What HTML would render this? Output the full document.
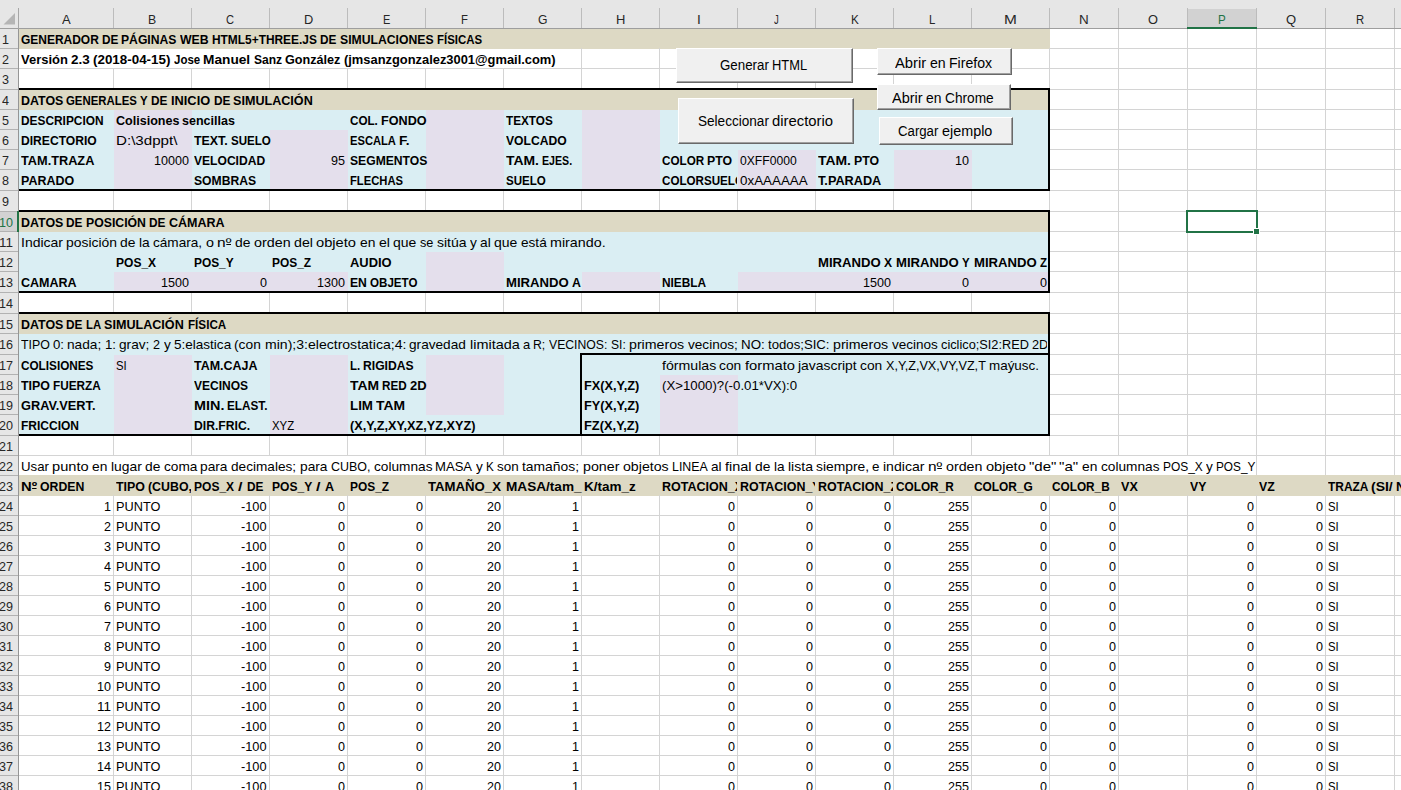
<!DOCTYPE html>
<html lang="es"><head><meta charset="utf-8"><title>Generador de simulaciones físicas</title><style>
html,body{margin:0;padding:0;}
body{width:1401px;height:790px;overflow:hidden;background:#fff;position:relative;font-family:"Liberation Sans",sans-serif;color:#000;}
#s{position:absolute;left:0;top:0;width:1401px;height:790px;overflow:hidden;}
#s div{position:absolute;}
.t{white-space:nowrap;line-height:20px;height:20px;}
.t span{display:inline-block;transform-origin:0 0;white-space:pre;word-spacing:0;}
.t i{font-style:normal;background:linear-gradient(currentColor,currentColor) no-repeat 50% 9px/86% 1px;}
.clip{overflow:hidden;}
.btn{background:#f0f0f0;box-sizing:border-box;border-top:1px solid #fff;border-left:1px solid #fff;border-right:1px solid #696969;border-bottom:1px solid #696969;box-shadow:inset -1px -1px 0 #a0a0a0;}
</style></head><body><div id="s">
<div style="left:19px;top:29px;width:1031px;height:20px;background:#ddd9c4;"></div>
<div style="left:19px;top:90px;width:1031px;height:20px;background:#ddd9c4;"></div>
<div style="left:19px;top:110px;width:1031px;height:81px;background:#daeef3;"></div>
<div style="left:114px;top:110px;width:78px;height:81px;background:#e4dfec;"></div>
<div style="left:270px;top:130px;width:78px;height:61px;background:#e4dfec;"></div>
<div style="left:426px;top:110px;width:78px;height:81px;background:#e4dfec;"></div>
<div style="left:582px;top:110px;width:78px;height:81px;background:#e4dfec;"></div>
<div style="left:738px;top:150px;width:78px;height:41px;background:#e4dfec;"></div>
<div style="left:894px;top:150px;width:78px;height:41px;background:#e4dfec;"></div>
<div style="left:19px;top:212px;width:1031px;height:20px;background:#ddd9c4;"></div>
<div style="left:19px;top:232px;width:1031px;height:61px;background:#daeef3;"></div>
<div style="left:114px;top:272px;width:78px;height:21px;background:#e4dfec;"></div>
<div style="left:192px;top:272px;width:78px;height:21px;background:#e4dfec;"></div>
<div style="left:270px;top:272px;width:78px;height:21px;background:#e4dfec;"></div>
<div style="left:426px;top:252px;width:78px;height:41px;background:#e4dfec;"></div>
<div style="left:582px;top:272px;width:78px;height:21px;background:#e4dfec;"></div>
<div style="left:738px;top:272px;width:78px;height:21px;background:#e4dfec;"></div>
<div style="left:816px;top:272px;width:78px;height:21px;background:#e4dfec;"></div>
<div style="left:894px;top:272px;width:78px;height:21px;background:#e4dfec;"></div>
<div style="left:972px;top:272px;width:78px;height:21px;background:#e4dfec;"></div>
<div style="left:19px;top:314px;width:1031px;height:20px;background:#ddd9c4;"></div>
<div style="left:19px;top:334px;width:1031px;height:102px;background:#daeef3;"></div>
<div style="left:114px;top:355px;width:78px;height:81px;background:#e4dfec;"></div>
<div style="left:270px;top:355px;width:78px;height:81px;background:#e4dfec;"></div>
<div style="left:426px;top:355px;width:78px;height:60px;background:#e4dfec;"></div>
<div style="left:660px;top:375px;width:78px;height:61px;background:#e4dfec;"></div>
<div style="left:19px;top:476px;width:1445px;height:20px;background:#ddd9c4;"></div>
<div style="left:1050px;top:48px;width:351px;height:1px;background:#d4d4d4;"></div>
<div style="left:19px;top:68px;width:1382px;height:1px;background:#d4d4d4;"></div>
<div style="left:19px;top:89px;width:1382px;height:1px;background:#d4d4d4;"></div>
<div style="left:1050px;top:109px;width:351px;height:1px;background:#d4d4d4;"></div>
<div style="left:1050px;top:129px;width:351px;height:1px;background:#d4d4d4;"></div>
<div style="left:1050px;top:149px;width:351px;height:1px;background:#d4d4d4;"></div>
<div style="left:1050px;top:169px;width:351px;height:1px;background:#d4d4d4;"></div>
<div style="left:1050px;top:190px;width:351px;height:1px;background:#d4d4d4;"></div>
<div style="left:19px;top:211px;width:1382px;height:1px;background:#d4d4d4;"></div>
<div style="left:1050px;top:231px;width:351px;height:1px;background:#d4d4d4;"></div>
<div style="left:1050px;top:251px;width:351px;height:1px;background:#d4d4d4;"></div>
<div style="left:1050px;top:271px;width:351px;height:1px;background:#d4d4d4;"></div>
<div style="left:1050px;top:292px;width:351px;height:1px;background:#d4d4d4;"></div>
<div style="left:19px;top:313px;width:1382px;height:1px;background:#d4d4d4;"></div>
<div style="left:1050px;top:333px;width:351px;height:1px;background:#d4d4d4;"></div>
<div style="left:1050px;top:354px;width:351px;height:1px;background:#d4d4d4;"></div>
<div style="left:1050px;top:374px;width:351px;height:1px;background:#d4d4d4;"></div>
<div style="left:1050px;top:394px;width:351px;height:1px;background:#d4d4d4;"></div>
<div style="left:1050px;top:414px;width:351px;height:1px;background:#d4d4d4;"></div>
<div style="left:1050px;top:435px;width:351px;height:1px;background:#d4d4d4;"></div>
<div style="left:19px;top:455px;width:1382px;height:1px;background:#d4d4d4;"></div>
<div style="left:19px;top:475px;width:1382px;height:1px;background:#d4d4d4;"></div>
<div style="left:19px;top:515px;width:1382px;height:1px;background:#d4d4d4;"></div>
<div style="left:19px;top:535px;width:1382px;height:1px;background:#d4d4d4;"></div>
<div style="left:19px;top:555px;width:1382px;height:1px;background:#d4d4d4;"></div>
<div style="left:19px;top:575px;width:1382px;height:1px;background:#d4d4d4;"></div>
<div style="left:19px;top:595px;width:1382px;height:1px;background:#d4d4d4;"></div>
<div style="left:19px;top:615px;width:1382px;height:1px;background:#d4d4d4;"></div>
<div style="left:19px;top:635px;width:1382px;height:1px;background:#d4d4d4;"></div>
<div style="left:19px;top:655px;width:1382px;height:1px;background:#d4d4d4;"></div>
<div style="left:19px;top:675px;width:1382px;height:1px;background:#d4d4d4;"></div>
<div style="left:19px;top:695px;width:1382px;height:1px;background:#d4d4d4;"></div>
<div style="left:19px;top:715px;width:1382px;height:1px;background:#d4d4d4;"></div>
<div style="left:19px;top:735px;width:1382px;height:1px;background:#d4d4d4;"></div>
<div style="left:19px;top:755px;width:1382px;height:1px;background:#d4d4d4;"></div>
<div style="left:19px;top:775px;width:1382px;height:1px;background:#d4d4d4;"></div>
<div style="left:1118px;top:28px;width:1px;height:21px;background:#d4d4d4;"></div>
<div style="left:1187px;top:28px;width:1px;height:21px;background:#d4d4d4;"></div>
<div style="left:1256px;top:28px;width:1px;height:21px;background:#d4d4d4;"></div>
<div style="left:1325px;top:28px;width:1px;height:21px;background:#d4d4d4;"></div>
<div style="left:1394px;top:28px;width:1px;height:21px;background:#d4d4d4;"></div>
<div style="left:581px;top:48px;width:1px;height:21px;background:#d4d4d4;"></div>
<div style="left:659px;top:48px;width:1px;height:21px;background:#d4d4d4;"></div>
<div style="left:737px;top:48px;width:1px;height:21px;background:#d4d4d4;"></div>
<div style="left:815px;top:48px;width:1px;height:21px;background:#d4d4d4;"></div>
<div style="left:893px;top:48px;width:1px;height:21px;background:#d4d4d4;"></div>
<div style="left:971px;top:48px;width:1px;height:21px;background:#d4d4d4;"></div>
<div style="left:1049px;top:48px;width:1px;height:21px;background:#d4d4d4;"></div>
<div style="left:1118px;top:48px;width:1px;height:21px;background:#d4d4d4;"></div>
<div style="left:1187px;top:48px;width:1px;height:21px;background:#d4d4d4;"></div>
<div style="left:1256px;top:48px;width:1px;height:21px;background:#d4d4d4;"></div>
<div style="left:1325px;top:48px;width:1px;height:21px;background:#d4d4d4;"></div>
<div style="left:1394px;top:48px;width:1px;height:21px;background:#d4d4d4;"></div>
<div style="left:113px;top:68px;width:1px;height:22px;background:#d4d4d4;"></div>
<div style="left:191px;top:68px;width:1px;height:22px;background:#d4d4d4;"></div>
<div style="left:269px;top:68px;width:1px;height:22px;background:#d4d4d4;"></div>
<div style="left:347px;top:68px;width:1px;height:22px;background:#d4d4d4;"></div>
<div style="left:425px;top:68px;width:1px;height:22px;background:#d4d4d4;"></div>
<div style="left:503px;top:68px;width:1px;height:22px;background:#d4d4d4;"></div>
<div style="left:581px;top:68px;width:1px;height:22px;background:#d4d4d4;"></div>
<div style="left:659px;top:68px;width:1px;height:22px;background:#d4d4d4;"></div>
<div style="left:737px;top:68px;width:1px;height:22px;background:#d4d4d4;"></div>
<div style="left:815px;top:68px;width:1px;height:22px;background:#d4d4d4;"></div>
<div style="left:893px;top:68px;width:1px;height:22px;background:#d4d4d4;"></div>
<div style="left:971px;top:68px;width:1px;height:22px;background:#d4d4d4;"></div>
<div style="left:1049px;top:68px;width:1px;height:22px;background:#d4d4d4;"></div>
<div style="left:1118px;top:68px;width:1px;height:22px;background:#d4d4d4;"></div>
<div style="left:1187px;top:68px;width:1px;height:22px;background:#d4d4d4;"></div>
<div style="left:1256px;top:68px;width:1px;height:22px;background:#d4d4d4;"></div>
<div style="left:1325px;top:68px;width:1px;height:22px;background:#d4d4d4;"></div>
<div style="left:1394px;top:68px;width:1px;height:22px;background:#d4d4d4;"></div>
<div style="left:1118px;top:89px;width:1px;height:21px;background:#d4d4d4;"></div>
<div style="left:1187px;top:89px;width:1px;height:21px;background:#d4d4d4;"></div>
<div style="left:1256px;top:89px;width:1px;height:21px;background:#d4d4d4;"></div>
<div style="left:1325px;top:89px;width:1px;height:21px;background:#d4d4d4;"></div>
<div style="left:1394px;top:89px;width:1px;height:21px;background:#d4d4d4;"></div>
<div style="left:1118px;top:109px;width:1px;height:21px;background:#d4d4d4;"></div>
<div style="left:1187px;top:109px;width:1px;height:21px;background:#d4d4d4;"></div>
<div style="left:1256px;top:109px;width:1px;height:21px;background:#d4d4d4;"></div>
<div style="left:1325px;top:109px;width:1px;height:21px;background:#d4d4d4;"></div>
<div style="left:1394px;top:109px;width:1px;height:21px;background:#d4d4d4;"></div>
<div style="left:1118px;top:129px;width:1px;height:21px;background:#d4d4d4;"></div>
<div style="left:1187px;top:129px;width:1px;height:21px;background:#d4d4d4;"></div>
<div style="left:1256px;top:129px;width:1px;height:21px;background:#d4d4d4;"></div>
<div style="left:1325px;top:129px;width:1px;height:21px;background:#d4d4d4;"></div>
<div style="left:1394px;top:129px;width:1px;height:21px;background:#d4d4d4;"></div>
<div style="left:1118px;top:149px;width:1px;height:21px;background:#d4d4d4;"></div>
<div style="left:1187px;top:149px;width:1px;height:21px;background:#d4d4d4;"></div>
<div style="left:1256px;top:149px;width:1px;height:21px;background:#d4d4d4;"></div>
<div style="left:1325px;top:149px;width:1px;height:21px;background:#d4d4d4;"></div>
<div style="left:1394px;top:149px;width:1px;height:21px;background:#d4d4d4;"></div>
<div style="left:1118px;top:169px;width:1px;height:22px;background:#d4d4d4;"></div>
<div style="left:1187px;top:169px;width:1px;height:22px;background:#d4d4d4;"></div>
<div style="left:1256px;top:169px;width:1px;height:22px;background:#d4d4d4;"></div>
<div style="left:1325px;top:169px;width:1px;height:22px;background:#d4d4d4;"></div>
<div style="left:1394px;top:169px;width:1px;height:22px;background:#d4d4d4;"></div>
<div style="left:113px;top:190px;width:1px;height:22px;background:#d4d4d4;"></div>
<div style="left:191px;top:190px;width:1px;height:22px;background:#d4d4d4;"></div>
<div style="left:269px;top:190px;width:1px;height:22px;background:#d4d4d4;"></div>
<div style="left:347px;top:190px;width:1px;height:22px;background:#d4d4d4;"></div>
<div style="left:425px;top:190px;width:1px;height:22px;background:#d4d4d4;"></div>
<div style="left:503px;top:190px;width:1px;height:22px;background:#d4d4d4;"></div>
<div style="left:581px;top:190px;width:1px;height:22px;background:#d4d4d4;"></div>
<div style="left:659px;top:190px;width:1px;height:22px;background:#d4d4d4;"></div>
<div style="left:737px;top:190px;width:1px;height:22px;background:#d4d4d4;"></div>
<div style="left:815px;top:190px;width:1px;height:22px;background:#d4d4d4;"></div>
<div style="left:893px;top:190px;width:1px;height:22px;background:#d4d4d4;"></div>
<div style="left:971px;top:190px;width:1px;height:22px;background:#d4d4d4;"></div>
<div style="left:1049px;top:190px;width:1px;height:22px;background:#d4d4d4;"></div>
<div style="left:1118px;top:190px;width:1px;height:22px;background:#d4d4d4;"></div>
<div style="left:1187px;top:190px;width:1px;height:22px;background:#d4d4d4;"></div>
<div style="left:1256px;top:190px;width:1px;height:22px;background:#d4d4d4;"></div>
<div style="left:1325px;top:190px;width:1px;height:22px;background:#d4d4d4;"></div>
<div style="left:1394px;top:190px;width:1px;height:22px;background:#d4d4d4;"></div>
<div style="left:1118px;top:211px;width:1px;height:21px;background:#d4d4d4;"></div>
<div style="left:1187px;top:211px;width:1px;height:21px;background:#d4d4d4;"></div>
<div style="left:1256px;top:211px;width:1px;height:21px;background:#d4d4d4;"></div>
<div style="left:1325px;top:211px;width:1px;height:21px;background:#d4d4d4;"></div>
<div style="left:1394px;top:211px;width:1px;height:21px;background:#d4d4d4;"></div>
<div style="left:1118px;top:231px;width:1px;height:21px;background:#d4d4d4;"></div>
<div style="left:1187px;top:231px;width:1px;height:21px;background:#d4d4d4;"></div>
<div style="left:1256px;top:231px;width:1px;height:21px;background:#d4d4d4;"></div>
<div style="left:1325px;top:231px;width:1px;height:21px;background:#d4d4d4;"></div>
<div style="left:1394px;top:231px;width:1px;height:21px;background:#d4d4d4;"></div>
<div style="left:1118px;top:251px;width:1px;height:21px;background:#d4d4d4;"></div>
<div style="left:1187px;top:251px;width:1px;height:21px;background:#d4d4d4;"></div>
<div style="left:1256px;top:251px;width:1px;height:21px;background:#d4d4d4;"></div>
<div style="left:1325px;top:251px;width:1px;height:21px;background:#d4d4d4;"></div>
<div style="left:1394px;top:251px;width:1px;height:21px;background:#d4d4d4;"></div>
<div style="left:1118px;top:271px;width:1px;height:22px;background:#d4d4d4;"></div>
<div style="left:1187px;top:271px;width:1px;height:22px;background:#d4d4d4;"></div>
<div style="left:1256px;top:271px;width:1px;height:22px;background:#d4d4d4;"></div>
<div style="left:1325px;top:271px;width:1px;height:22px;background:#d4d4d4;"></div>
<div style="left:1394px;top:271px;width:1px;height:22px;background:#d4d4d4;"></div>
<div style="left:113px;top:292px;width:1px;height:22px;background:#d4d4d4;"></div>
<div style="left:191px;top:292px;width:1px;height:22px;background:#d4d4d4;"></div>
<div style="left:269px;top:292px;width:1px;height:22px;background:#d4d4d4;"></div>
<div style="left:347px;top:292px;width:1px;height:22px;background:#d4d4d4;"></div>
<div style="left:425px;top:292px;width:1px;height:22px;background:#d4d4d4;"></div>
<div style="left:503px;top:292px;width:1px;height:22px;background:#d4d4d4;"></div>
<div style="left:581px;top:292px;width:1px;height:22px;background:#d4d4d4;"></div>
<div style="left:659px;top:292px;width:1px;height:22px;background:#d4d4d4;"></div>
<div style="left:737px;top:292px;width:1px;height:22px;background:#d4d4d4;"></div>
<div style="left:815px;top:292px;width:1px;height:22px;background:#d4d4d4;"></div>
<div style="left:893px;top:292px;width:1px;height:22px;background:#d4d4d4;"></div>
<div style="left:971px;top:292px;width:1px;height:22px;background:#d4d4d4;"></div>
<div style="left:1049px;top:292px;width:1px;height:22px;background:#d4d4d4;"></div>
<div style="left:1118px;top:292px;width:1px;height:22px;background:#d4d4d4;"></div>
<div style="left:1187px;top:292px;width:1px;height:22px;background:#d4d4d4;"></div>
<div style="left:1256px;top:292px;width:1px;height:22px;background:#d4d4d4;"></div>
<div style="left:1325px;top:292px;width:1px;height:22px;background:#d4d4d4;"></div>
<div style="left:1394px;top:292px;width:1px;height:22px;background:#d4d4d4;"></div>
<div style="left:1118px;top:313px;width:1px;height:21px;background:#d4d4d4;"></div>
<div style="left:1187px;top:313px;width:1px;height:21px;background:#d4d4d4;"></div>
<div style="left:1256px;top:313px;width:1px;height:21px;background:#d4d4d4;"></div>
<div style="left:1325px;top:313px;width:1px;height:21px;background:#d4d4d4;"></div>
<div style="left:1394px;top:313px;width:1px;height:21px;background:#d4d4d4;"></div>
<div style="left:1118px;top:333px;width:1px;height:22px;background:#d4d4d4;"></div>
<div style="left:1187px;top:333px;width:1px;height:22px;background:#d4d4d4;"></div>
<div style="left:1256px;top:333px;width:1px;height:22px;background:#d4d4d4;"></div>
<div style="left:1325px;top:333px;width:1px;height:22px;background:#d4d4d4;"></div>
<div style="left:1394px;top:333px;width:1px;height:22px;background:#d4d4d4;"></div>
<div style="left:1118px;top:354px;width:1px;height:21px;background:#d4d4d4;"></div>
<div style="left:1187px;top:354px;width:1px;height:21px;background:#d4d4d4;"></div>
<div style="left:1256px;top:354px;width:1px;height:21px;background:#d4d4d4;"></div>
<div style="left:1325px;top:354px;width:1px;height:21px;background:#d4d4d4;"></div>
<div style="left:1394px;top:354px;width:1px;height:21px;background:#d4d4d4;"></div>
<div style="left:1118px;top:374px;width:1px;height:21px;background:#d4d4d4;"></div>
<div style="left:1187px;top:374px;width:1px;height:21px;background:#d4d4d4;"></div>
<div style="left:1256px;top:374px;width:1px;height:21px;background:#d4d4d4;"></div>
<div style="left:1325px;top:374px;width:1px;height:21px;background:#d4d4d4;"></div>
<div style="left:1394px;top:374px;width:1px;height:21px;background:#d4d4d4;"></div>
<div style="left:1118px;top:394px;width:1px;height:21px;background:#d4d4d4;"></div>
<div style="left:1187px;top:394px;width:1px;height:21px;background:#d4d4d4;"></div>
<div style="left:1256px;top:394px;width:1px;height:21px;background:#d4d4d4;"></div>
<div style="left:1325px;top:394px;width:1px;height:21px;background:#d4d4d4;"></div>
<div style="left:1394px;top:394px;width:1px;height:21px;background:#d4d4d4;"></div>
<div style="left:1118px;top:414px;width:1px;height:22px;background:#d4d4d4;"></div>
<div style="left:1187px;top:414px;width:1px;height:22px;background:#d4d4d4;"></div>
<div style="left:1256px;top:414px;width:1px;height:22px;background:#d4d4d4;"></div>
<div style="left:1325px;top:414px;width:1px;height:22px;background:#d4d4d4;"></div>
<div style="left:1394px;top:414px;width:1px;height:22px;background:#d4d4d4;"></div>
<div style="left:113px;top:435px;width:1px;height:21px;background:#d4d4d4;"></div>
<div style="left:191px;top:435px;width:1px;height:21px;background:#d4d4d4;"></div>
<div style="left:269px;top:435px;width:1px;height:21px;background:#d4d4d4;"></div>
<div style="left:347px;top:435px;width:1px;height:21px;background:#d4d4d4;"></div>
<div style="left:425px;top:435px;width:1px;height:21px;background:#d4d4d4;"></div>
<div style="left:503px;top:435px;width:1px;height:21px;background:#d4d4d4;"></div>
<div style="left:581px;top:435px;width:1px;height:21px;background:#d4d4d4;"></div>
<div style="left:659px;top:435px;width:1px;height:21px;background:#d4d4d4;"></div>
<div style="left:737px;top:435px;width:1px;height:21px;background:#d4d4d4;"></div>
<div style="left:815px;top:435px;width:1px;height:21px;background:#d4d4d4;"></div>
<div style="left:893px;top:435px;width:1px;height:21px;background:#d4d4d4;"></div>
<div style="left:971px;top:435px;width:1px;height:21px;background:#d4d4d4;"></div>
<div style="left:1049px;top:435px;width:1px;height:21px;background:#d4d4d4;"></div>
<div style="left:1118px;top:435px;width:1px;height:21px;background:#d4d4d4;"></div>
<div style="left:1187px;top:435px;width:1px;height:21px;background:#d4d4d4;"></div>
<div style="left:1256px;top:435px;width:1px;height:21px;background:#d4d4d4;"></div>
<div style="left:1325px;top:435px;width:1px;height:21px;background:#d4d4d4;"></div>
<div style="left:1394px;top:435px;width:1px;height:21px;background:#d4d4d4;"></div>
<div style="left:1256px;top:455px;width:1px;height:21px;background:#d4d4d4;"></div>
<div style="left:1325px;top:455px;width:1px;height:21px;background:#d4d4d4;"></div>
<div style="left:1394px;top:455px;width:1px;height:21px;background:#d4d4d4;"></div>
<div style="left:113px;top:495px;width:1px;height:21px;background:#d4d4d4;"></div>
<div style="left:191px;top:495px;width:1px;height:21px;background:#d4d4d4;"></div>
<div style="left:269px;top:495px;width:1px;height:21px;background:#d4d4d4;"></div>
<div style="left:347px;top:495px;width:1px;height:21px;background:#d4d4d4;"></div>
<div style="left:425px;top:495px;width:1px;height:21px;background:#d4d4d4;"></div>
<div style="left:503px;top:495px;width:1px;height:21px;background:#d4d4d4;"></div>
<div style="left:581px;top:495px;width:1px;height:21px;background:#d4d4d4;"></div>
<div style="left:659px;top:495px;width:1px;height:21px;background:#d4d4d4;"></div>
<div style="left:737px;top:495px;width:1px;height:21px;background:#d4d4d4;"></div>
<div style="left:815px;top:495px;width:1px;height:21px;background:#d4d4d4;"></div>
<div style="left:893px;top:495px;width:1px;height:21px;background:#d4d4d4;"></div>
<div style="left:971px;top:495px;width:1px;height:21px;background:#d4d4d4;"></div>
<div style="left:1049px;top:495px;width:1px;height:21px;background:#d4d4d4;"></div>
<div style="left:1118px;top:495px;width:1px;height:21px;background:#d4d4d4;"></div>
<div style="left:1187px;top:495px;width:1px;height:21px;background:#d4d4d4;"></div>
<div style="left:1256px;top:495px;width:1px;height:21px;background:#d4d4d4;"></div>
<div style="left:1325px;top:495px;width:1px;height:21px;background:#d4d4d4;"></div>
<div style="left:1394px;top:495px;width:1px;height:21px;background:#d4d4d4;"></div>
<div style="left:113px;top:515px;width:1px;height:21px;background:#d4d4d4;"></div>
<div style="left:191px;top:515px;width:1px;height:21px;background:#d4d4d4;"></div>
<div style="left:269px;top:515px;width:1px;height:21px;background:#d4d4d4;"></div>
<div style="left:347px;top:515px;width:1px;height:21px;background:#d4d4d4;"></div>
<div style="left:425px;top:515px;width:1px;height:21px;background:#d4d4d4;"></div>
<div style="left:503px;top:515px;width:1px;height:21px;background:#d4d4d4;"></div>
<div style="left:581px;top:515px;width:1px;height:21px;background:#d4d4d4;"></div>
<div style="left:659px;top:515px;width:1px;height:21px;background:#d4d4d4;"></div>
<div style="left:737px;top:515px;width:1px;height:21px;background:#d4d4d4;"></div>
<div style="left:815px;top:515px;width:1px;height:21px;background:#d4d4d4;"></div>
<div style="left:893px;top:515px;width:1px;height:21px;background:#d4d4d4;"></div>
<div style="left:971px;top:515px;width:1px;height:21px;background:#d4d4d4;"></div>
<div style="left:1049px;top:515px;width:1px;height:21px;background:#d4d4d4;"></div>
<div style="left:1118px;top:515px;width:1px;height:21px;background:#d4d4d4;"></div>
<div style="left:1187px;top:515px;width:1px;height:21px;background:#d4d4d4;"></div>
<div style="left:1256px;top:515px;width:1px;height:21px;background:#d4d4d4;"></div>
<div style="left:1325px;top:515px;width:1px;height:21px;background:#d4d4d4;"></div>
<div style="left:1394px;top:515px;width:1px;height:21px;background:#d4d4d4;"></div>
<div style="left:113px;top:535px;width:1px;height:21px;background:#d4d4d4;"></div>
<div style="left:191px;top:535px;width:1px;height:21px;background:#d4d4d4;"></div>
<div style="left:269px;top:535px;width:1px;height:21px;background:#d4d4d4;"></div>
<div style="left:347px;top:535px;width:1px;height:21px;background:#d4d4d4;"></div>
<div style="left:425px;top:535px;width:1px;height:21px;background:#d4d4d4;"></div>
<div style="left:503px;top:535px;width:1px;height:21px;background:#d4d4d4;"></div>
<div style="left:581px;top:535px;width:1px;height:21px;background:#d4d4d4;"></div>
<div style="left:659px;top:535px;width:1px;height:21px;background:#d4d4d4;"></div>
<div style="left:737px;top:535px;width:1px;height:21px;background:#d4d4d4;"></div>
<div style="left:815px;top:535px;width:1px;height:21px;background:#d4d4d4;"></div>
<div style="left:893px;top:535px;width:1px;height:21px;background:#d4d4d4;"></div>
<div style="left:971px;top:535px;width:1px;height:21px;background:#d4d4d4;"></div>
<div style="left:1049px;top:535px;width:1px;height:21px;background:#d4d4d4;"></div>
<div style="left:1118px;top:535px;width:1px;height:21px;background:#d4d4d4;"></div>
<div style="left:1187px;top:535px;width:1px;height:21px;background:#d4d4d4;"></div>
<div style="left:1256px;top:535px;width:1px;height:21px;background:#d4d4d4;"></div>
<div style="left:1325px;top:535px;width:1px;height:21px;background:#d4d4d4;"></div>
<div style="left:1394px;top:535px;width:1px;height:21px;background:#d4d4d4;"></div>
<div style="left:113px;top:555px;width:1px;height:21px;background:#d4d4d4;"></div>
<div style="left:191px;top:555px;width:1px;height:21px;background:#d4d4d4;"></div>
<div style="left:269px;top:555px;width:1px;height:21px;background:#d4d4d4;"></div>
<div style="left:347px;top:555px;width:1px;height:21px;background:#d4d4d4;"></div>
<div style="left:425px;top:555px;width:1px;height:21px;background:#d4d4d4;"></div>
<div style="left:503px;top:555px;width:1px;height:21px;background:#d4d4d4;"></div>
<div style="left:581px;top:555px;width:1px;height:21px;background:#d4d4d4;"></div>
<div style="left:659px;top:555px;width:1px;height:21px;background:#d4d4d4;"></div>
<div style="left:737px;top:555px;width:1px;height:21px;background:#d4d4d4;"></div>
<div style="left:815px;top:555px;width:1px;height:21px;background:#d4d4d4;"></div>
<div style="left:893px;top:555px;width:1px;height:21px;background:#d4d4d4;"></div>
<div style="left:971px;top:555px;width:1px;height:21px;background:#d4d4d4;"></div>
<div style="left:1049px;top:555px;width:1px;height:21px;background:#d4d4d4;"></div>
<div style="left:1118px;top:555px;width:1px;height:21px;background:#d4d4d4;"></div>
<div style="left:1187px;top:555px;width:1px;height:21px;background:#d4d4d4;"></div>
<div style="left:1256px;top:555px;width:1px;height:21px;background:#d4d4d4;"></div>
<div style="left:1325px;top:555px;width:1px;height:21px;background:#d4d4d4;"></div>
<div style="left:1394px;top:555px;width:1px;height:21px;background:#d4d4d4;"></div>
<div style="left:113px;top:575px;width:1px;height:21px;background:#d4d4d4;"></div>
<div style="left:191px;top:575px;width:1px;height:21px;background:#d4d4d4;"></div>
<div style="left:269px;top:575px;width:1px;height:21px;background:#d4d4d4;"></div>
<div style="left:347px;top:575px;width:1px;height:21px;background:#d4d4d4;"></div>
<div style="left:425px;top:575px;width:1px;height:21px;background:#d4d4d4;"></div>
<div style="left:503px;top:575px;width:1px;height:21px;background:#d4d4d4;"></div>
<div style="left:581px;top:575px;width:1px;height:21px;background:#d4d4d4;"></div>
<div style="left:659px;top:575px;width:1px;height:21px;background:#d4d4d4;"></div>
<div style="left:737px;top:575px;width:1px;height:21px;background:#d4d4d4;"></div>
<div style="left:815px;top:575px;width:1px;height:21px;background:#d4d4d4;"></div>
<div style="left:893px;top:575px;width:1px;height:21px;background:#d4d4d4;"></div>
<div style="left:971px;top:575px;width:1px;height:21px;background:#d4d4d4;"></div>
<div style="left:1049px;top:575px;width:1px;height:21px;background:#d4d4d4;"></div>
<div style="left:1118px;top:575px;width:1px;height:21px;background:#d4d4d4;"></div>
<div style="left:1187px;top:575px;width:1px;height:21px;background:#d4d4d4;"></div>
<div style="left:1256px;top:575px;width:1px;height:21px;background:#d4d4d4;"></div>
<div style="left:1325px;top:575px;width:1px;height:21px;background:#d4d4d4;"></div>
<div style="left:1394px;top:575px;width:1px;height:21px;background:#d4d4d4;"></div>
<div style="left:113px;top:595px;width:1px;height:21px;background:#d4d4d4;"></div>
<div style="left:191px;top:595px;width:1px;height:21px;background:#d4d4d4;"></div>
<div style="left:269px;top:595px;width:1px;height:21px;background:#d4d4d4;"></div>
<div style="left:347px;top:595px;width:1px;height:21px;background:#d4d4d4;"></div>
<div style="left:425px;top:595px;width:1px;height:21px;background:#d4d4d4;"></div>
<div style="left:503px;top:595px;width:1px;height:21px;background:#d4d4d4;"></div>
<div style="left:581px;top:595px;width:1px;height:21px;background:#d4d4d4;"></div>
<div style="left:659px;top:595px;width:1px;height:21px;background:#d4d4d4;"></div>
<div style="left:737px;top:595px;width:1px;height:21px;background:#d4d4d4;"></div>
<div style="left:815px;top:595px;width:1px;height:21px;background:#d4d4d4;"></div>
<div style="left:893px;top:595px;width:1px;height:21px;background:#d4d4d4;"></div>
<div style="left:971px;top:595px;width:1px;height:21px;background:#d4d4d4;"></div>
<div style="left:1049px;top:595px;width:1px;height:21px;background:#d4d4d4;"></div>
<div style="left:1118px;top:595px;width:1px;height:21px;background:#d4d4d4;"></div>
<div style="left:1187px;top:595px;width:1px;height:21px;background:#d4d4d4;"></div>
<div style="left:1256px;top:595px;width:1px;height:21px;background:#d4d4d4;"></div>
<div style="left:1325px;top:595px;width:1px;height:21px;background:#d4d4d4;"></div>
<div style="left:1394px;top:595px;width:1px;height:21px;background:#d4d4d4;"></div>
<div style="left:113px;top:615px;width:1px;height:21px;background:#d4d4d4;"></div>
<div style="left:191px;top:615px;width:1px;height:21px;background:#d4d4d4;"></div>
<div style="left:269px;top:615px;width:1px;height:21px;background:#d4d4d4;"></div>
<div style="left:347px;top:615px;width:1px;height:21px;background:#d4d4d4;"></div>
<div style="left:425px;top:615px;width:1px;height:21px;background:#d4d4d4;"></div>
<div style="left:503px;top:615px;width:1px;height:21px;background:#d4d4d4;"></div>
<div style="left:581px;top:615px;width:1px;height:21px;background:#d4d4d4;"></div>
<div style="left:659px;top:615px;width:1px;height:21px;background:#d4d4d4;"></div>
<div style="left:737px;top:615px;width:1px;height:21px;background:#d4d4d4;"></div>
<div style="left:815px;top:615px;width:1px;height:21px;background:#d4d4d4;"></div>
<div style="left:893px;top:615px;width:1px;height:21px;background:#d4d4d4;"></div>
<div style="left:971px;top:615px;width:1px;height:21px;background:#d4d4d4;"></div>
<div style="left:1049px;top:615px;width:1px;height:21px;background:#d4d4d4;"></div>
<div style="left:1118px;top:615px;width:1px;height:21px;background:#d4d4d4;"></div>
<div style="left:1187px;top:615px;width:1px;height:21px;background:#d4d4d4;"></div>
<div style="left:1256px;top:615px;width:1px;height:21px;background:#d4d4d4;"></div>
<div style="left:1325px;top:615px;width:1px;height:21px;background:#d4d4d4;"></div>
<div style="left:1394px;top:615px;width:1px;height:21px;background:#d4d4d4;"></div>
<div style="left:113px;top:635px;width:1px;height:21px;background:#d4d4d4;"></div>
<div style="left:191px;top:635px;width:1px;height:21px;background:#d4d4d4;"></div>
<div style="left:269px;top:635px;width:1px;height:21px;background:#d4d4d4;"></div>
<div style="left:347px;top:635px;width:1px;height:21px;background:#d4d4d4;"></div>
<div style="left:425px;top:635px;width:1px;height:21px;background:#d4d4d4;"></div>
<div style="left:503px;top:635px;width:1px;height:21px;background:#d4d4d4;"></div>
<div style="left:581px;top:635px;width:1px;height:21px;background:#d4d4d4;"></div>
<div style="left:659px;top:635px;width:1px;height:21px;background:#d4d4d4;"></div>
<div style="left:737px;top:635px;width:1px;height:21px;background:#d4d4d4;"></div>
<div style="left:815px;top:635px;width:1px;height:21px;background:#d4d4d4;"></div>
<div style="left:893px;top:635px;width:1px;height:21px;background:#d4d4d4;"></div>
<div style="left:971px;top:635px;width:1px;height:21px;background:#d4d4d4;"></div>
<div style="left:1049px;top:635px;width:1px;height:21px;background:#d4d4d4;"></div>
<div style="left:1118px;top:635px;width:1px;height:21px;background:#d4d4d4;"></div>
<div style="left:1187px;top:635px;width:1px;height:21px;background:#d4d4d4;"></div>
<div style="left:1256px;top:635px;width:1px;height:21px;background:#d4d4d4;"></div>
<div style="left:1325px;top:635px;width:1px;height:21px;background:#d4d4d4;"></div>
<div style="left:1394px;top:635px;width:1px;height:21px;background:#d4d4d4;"></div>
<div style="left:113px;top:655px;width:1px;height:21px;background:#d4d4d4;"></div>
<div style="left:191px;top:655px;width:1px;height:21px;background:#d4d4d4;"></div>
<div style="left:269px;top:655px;width:1px;height:21px;background:#d4d4d4;"></div>
<div style="left:347px;top:655px;width:1px;height:21px;background:#d4d4d4;"></div>
<div style="left:425px;top:655px;width:1px;height:21px;background:#d4d4d4;"></div>
<div style="left:503px;top:655px;width:1px;height:21px;background:#d4d4d4;"></div>
<div style="left:581px;top:655px;width:1px;height:21px;background:#d4d4d4;"></div>
<div style="left:659px;top:655px;width:1px;height:21px;background:#d4d4d4;"></div>
<div style="left:737px;top:655px;width:1px;height:21px;background:#d4d4d4;"></div>
<div style="left:815px;top:655px;width:1px;height:21px;background:#d4d4d4;"></div>
<div style="left:893px;top:655px;width:1px;height:21px;background:#d4d4d4;"></div>
<div style="left:971px;top:655px;width:1px;height:21px;background:#d4d4d4;"></div>
<div style="left:1049px;top:655px;width:1px;height:21px;background:#d4d4d4;"></div>
<div style="left:1118px;top:655px;width:1px;height:21px;background:#d4d4d4;"></div>
<div style="left:1187px;top:655px;width:1px;height:21px;background:#d4d4d4;"></div>
<div style="left:1256px;top:655px;width:1px;height:21px;background:#d4d4d4;"></div>
<div style="left:1325px;top:655px;width:1px;height:21px;background:#d4d4d4;"></div>
<div style="left:1394px;top:655px;width:1px;height:21px;background:#d4d4d4;"></div>
<div style="left:113px;top:675px;width:1px;height:21px;background:#d4d4d4;"></div>
<div style="left:191px;top:675px;width:1px;height:21px;background:#d4d4d4;"></div>
<div style="left:269px;top:675px;width:1px;height:21px;background:#d4d4d4;"></div>
<div style="left:347px;top:675px;width:1px;height:21px;background:#d4d4d4;"></div>
<div style="left:425px;top:675px;width:1px;height:21px;background:#d4d4d4;"></div>
<div style="left:503px;top:675px;width:1px;height:21px;background:#d4d4d4;"></div>
<div style="left:581px;top:675px;width:1px;height:21px;background:#d4d4d4;"></div>
<div style="left:659px;top:675px;width:1px;height:21px;background:#d4d4d4;"></div>
<div style="left:737px;top:675px;width:1px;height:21px;background:#d4d4d4;"></div>
<div style="left:815px;top:675px;width:1px;height:21px;background:#d4d4d4;"></div>
<div style="left:893px;top:675px;width:1px;height:21px;background:#d4d4d4;"></div>
<div style="left:971px;top:675px;width:1px;height:21px;background:#d4d4d4;"></div>
<div style="left:1049px;top:675px;width:1px;height:21px;background:#d4d4d4;"></div>
<div style="left:1118px;top:675px;width:1px;height:21px;background:#d4d4d4;"></div>
<div style="left:1187px;top:675px;width:1px;height:21px;background:#d4d4d4;"></div>
<div style="left:1256px;top:675px;width:1px;height:21px;background:#d4d4d4;"></div>
<div style="left:1325px;top:675px;width:1px;height:21px;background:#d4d4d4;"></div>
<div style="left:1394px;top:675px;width:1px;height:21px;background:#d4d4d4;"></div>
<div style="left:113px;top:695px;width:1px;height:21px;background:#d4d4d4;"></div>
<div style="left:191px;top:695px;width:1px;height:21px;background:#d4d4d4;"></div>
<div style="left:269px;top:695px;width:1px;height:21px;background:#d4d4d4;"></div>
<div style="left:347px;top:695px;width:1px;height:21px;background:#d4d4d4;"></div>
<div style="left:425px;top:695px;width:1px;height:21px;background:#d4d4d4;"></div>
<div style="left:503px;top:695px;width:1px;height:21px;background:#d4d4d4;"></div>
<div style="left:581px;top:695px;width:1px;height:21px;background:#d4d4d4;"></div>
<div style="left:659px;top:695px;width:1px;height:21px;background:#d4d4d4;"></div>
<div style="left:737px;top:695px;width:1px;height:21px;background:#d4d4d4;"></div>
<div style="left:815px;top:695px;width:1px;height:21px;background:#d4d4d4;"></div>
<div style="left:893px;top:695px;width:1px;height:21px;background:#d4d4d4;"></div>
<div style="left:971px;top:695px;width:1px;height:21px;background:#d4d4d4;"></div>
<div style="left:1049px;top:695px;width:1px;height:21px;background:#d4d4d4;"></div>
<div style="left:1118px;top:695px;width:1px;height:21px;background:#d4d4d4;"></div>
<div style="left:1187px;top:695px;width:1px;height:21px;background:#d4d4d4;"></div>
<div style="left:1256px;top:695px;width:1px;height:21px;background:#d4d4d4;"></div>
<div style="left:1325px;top:695px;width:1px;height:21px;background:#d4d4d4;"></div>
<div style="left:1394px;top:695px;width:1px;height:21px;background:#d4d4d4;"></div>
<div style="left:113px;top:715px;width:1px;height:21px;background:#d4d4d4;"></div>
<div style="left:191px;top:715px;width:1px;height:21px;background:#d4d4d4;"></div>
<div style="left:269px;top:715px;width:1px;height:21px;background:#d4d4d4;"></div>
<div style="left:347px;top:715px;width:1px;height:21px;background:#d4d4d4;"></div>
<div style="left:425px;top:715px;width:1px;height:21px;background:#d4d4d4;"></div>
<div style="left:503px;top:715px;width:1px;height:21px;background:#d4d4d4;"></div>
<div style="left:581px;top:715px;width:1px;height:21px;background:#d4d4d4;"></div>
<div style="left:659px;top:715px;width:1px;height:21px;background:#d4d4d4;"></div>
<div style="left:737px;top:715px;width:1px;height:21px;background:#d4d4d4;"></div>
<div style="left:815px;top:715px;width:1px;height:21px;background:#d4d4d4;"></div>
<div style="left:893px;top:715px;width:1px;height:21px;background:#d4d4d4;"></div>
<div style="left:971px;top:715px;width:1px;height:21px;background:#d4d4d4;"></div>
<div style="left:1049px;top:715px;width:1px;height:21px;background:#d4d4d4;"></div>
<div style="left:1118px;top:715px;width:1px;height:21px;background:#d4d4d4;"></div>
<div style="left:1187px;top:715px;width:1px;height:21px;background:#d4d4d4;"></div>
<div style="left:1256px;top:715px;width:1px;height:21px;background:#d4d4d4;"></div>
<div style="left:1325px;top:715px;width:1px;height:21px;background:#d4d4d4;"></div>
<div style="left:1394px;top:715px;width:1px;height:21px;background:#d4d4d4;"></div>
<div style="left:113px;top:735px;width:1px;height:21px;background:#d4d4d4;"></div>
<div style="left:191px;top:735px;width:1px;height:21px;background:#d4d4d4;"></div>
<div style="left:269px;top:735px;width:1px;height:21px;background:#d4d4d4;"></div>
<div style="left:347px;top:735px;width:1px;height:21px;background:#d4d4d4;"></div>
<div style="left:425px;top:735px;width:1px;height:21px;background:#d4d4d4;"></div>
<div style="left:503px;top:735px;width:1px;height:21px;background:#d4d4d4;"></div>
<div style="left:581px;top:735px;width:1px;height:21px;background:#d4d4d4;"></div>
<div style="left:659px;top:735px;width:1px;height:21px;background:#d4d4d4;"></div>
<div style="left:737px;top:735px;width:1px;height:21px;background:#d4d4d4;"></div>
<div style="left:815px;top:735px;width:1px;height:21px;background:#d4d4d4;"></div>
<div style="left:893px;top:735px;width:1px;height:21px;background:#d4d4d4;"></div>
<div style="left:971px;top:735px;width:1px;height:21px;background:#d4d4d4;"></div>
<div style="left:1049px;top:735px;width:1px;height:21px;background:#d4d4d4;"></div>
<div style="left:1118px;top:735px;width:1px;height:21px;background:#d4d4d4;"></div>
<div style="left:1187px;top:735px;width:1px;height:21px;background:#d4d4d4;"></div>
<div style="left:1256px;top:735px;width:1px;height:21px;background:#d4d4d4;"></div>
<div style="left:1325px;top:735px;width:1px;height:21px;background:#d4d4d4;"></div>
<div style="left:1394px;top:735px;width:1px;height:21px;background:#d4d4d4;"></div>
<div style="left:113px;top:755px;width:1px;height:21px;background:#d4d4d4;"></div>
<div style="left:191px;top:755px;width:1px;height:21px;background:#d4d4d4;"></div>
<div style="left:269px;top:755px;width:1px;height:21px;background:#d4d4d4;"></div>
<div style="left:347px;top:755px;width:1px;height:21px;background:#d4d4d4;"></div>
<div style="left:425px;top:755px;width:1px;height:21px;background:#d4d4d4;"></div>
<div style="left:503px;top:755px;width:1px;height:21px;background:#d4d4d4;"></div>
<div style="left:581px;top:755px;width:1px;height:21px;background:#d4d4d4;"></div>
<div style="left:659px;top:755px;width:1px;height:21px;background:#d4d4d4;"></div>
<div style="left:737px;top:755px;width:1px;height:21px;background:#d4d4d4;"></div>
<div style="left:815px;top:755px;width:1px;height:21px;background:#d4d4d4;"></div>
<div style="left:893px;top:755px;width:1px;height:21px;background:#d4d4d4;"></div>
<div style="left:971px;top:755px;width:1px;height:21px;background:#d4d4d4;"></div>
<div style="left:1049px;top:755px;width:1px;height:21px;background:#d4d4d4;"></div>
<div style="left:1118px;top:755px;width:1px;height:21px;background:#d4d4d4;"></div>
<div style="left:1187px;top:755px;width:1px;height:21px;background:#d4d4d4;"></div>
<div style="left:1256px;top:755px;width:1px;height:21px;background:#d4d4d4;"></div>
<div style="left:1325px;top:755px;width:1px;height:21px;background:#d4d4d4;"></div>
<div style="left:1394px;top:755px;width:1px;height:21px;background:#d4d4d4;"></div>
<div style="left:113px;top:775px;width:1px;height:21px;background:#d4d4d4;"></div>
<div style="left:191px;top:775px;width:1px;height:21px;background:#d4d4d4;"></div>
<div style="left:269px;top:775px;width:1px;height:21px;background:#d4d4d4;"></div>
<div style="left:347px;top:775px;width:1px;height:21px;background:#d4d4d4;"></div>
<div style="left:425px;top:775px;width:1px;height:21px;background:#d4d4d4;"></div>
<div style="left:503px;top:775px;width:1px;height:21px;background:#d4d4d4;"></div>
<div style="left:581px;top:775px;width:1px;height:21px;background:#d4d4d4;"></div>
<div style="left:659px;top:775px;width:1px;height:21px;background:#d4d4d4;"></div>
<div style="left:737px;top:775px;width:1px;height:21px;background:#d4d4d4;"></div>
<div style="left:815px;top:775px;width:1px;height:21px;background:#d4d4d4;"></div>
<div style="left:893px;top:775px;width:1px;height:21px;background:#d4d4d4;"></div>
<div style="left:971px;top:775px;width:1px;height:21px;background:#d4d4d4;"></div>
<div style="left:1049px;top:775px;width:1px;height:21px;background:#d4d4d4;"></div>
<div style="left:1118px;top:775px;width:1px;height:21px;background:#d4d4d4;"></div>
<div style="left:1187px;top:775px;width:1px;height:21px;background:#d4d4d4;"></div>
<div style="left:1256px;top:775px;width:1px;height:21px;background:#d4d4d4;"></div>
<div style="left:1325px;top:775px;width:1px;height:21px;background:#d4d4d4;"></div>
<div style="left:1394px;top:775px;width:1px;height:21px;background:#d4d4d4;"></div>
<div style="left:19px;top:475px;width:1382px;height:1px;background:#ddd9c4;"></div>
<div style="left:19px;top:88px;width:1031px;height:2px;background:#000;"></div>
<div style="left:19px;top:189px;width:1031px;height:2px;background:#000;"></div>
<div style="left:1048px;top:88px;width:2px;height:103px;background:#000;"></div>
<div style="left:19px;top:210px;width:1031px;height:2px;background:#000;"></div>
<div style="left:19px;top:291px;width:1031px;height:2px;background:#000;"></div>
<div style="left:1048px;top:210px;width:2px;height:83px;background:#000;"></div>
<div style="left:19px;top:312px;width:1031px;height:2px;background:#000;"></div>
<div style="left:19px;top:434px;width:1031px;height:2px;background:#000;"></div>
<div style="left:1048px;top:312px;width:2px;height:124px;background:#000;"></div>
<div style="left:580px;top:353px;width:470px;height:2px;background:#000;"></div>
<div style="left:580px;top:434px;width:470px;height:2px;background:#000;"></div>
<div style="left:580px;top:353px;width:2px;height:83px;background:#000;"></div>
<div style="left:1048px;top:353px;width:2px;height:83px;background:#000;"></div>
<div class="t " style="left:20.60px;top:30px;font-size:13.33px;font-weight:bold;word-spacing:-0.390px;"><span style="width:77.818px;transform:scaleX(0.8980)">GENERADOR</span> <span style="width:16.387px;transform:scaleX(0.8849)">DE</span> <span style="width:55.384px;transform:scaleX(0.9119)">PÁGINAS</span> <span style="width:28.644px;transform:scaleX(0.9210)">WEB</span> <span style="width:104.871px;transform:scaleX(0.8933)">HTML5+THREE.JS</span> <span style="width:16.387px;transform:scaleX(0.8849)">DE</span> <span style="width:93.588px;transform:scaleX(0.9157)">SIMULACIONES</span> <span style="width:45.030px;transform:scaleX(0.8563)">FÍSICAS</span></div>
<div class="t " style="left:20.60px;top:50px;font-size:13.33px;font-weight:bold;word-spacing:-0.361px;"><span style="width:46.857px;transform:scaleX(0.9729)">Versión</span> <span style="width:18.734px;transform:scaleX(1.0109)">2.3</span> <span style="width:77.403px;transform:scaleX(1.0044)">(2018-04-15)</span> <span style="width:26.187px;transform:scaleX(0.8619)">Jose</span> <span style="width:47.168px;transform:scaleX(1.0271)">Manuel</span> <span style="width:28.100px;transform:scaleX(0.9032)">Sanz</span> <span style="width:55.434px;transform:scaleX(0.9473)">González</span> <span style="width:211.617px;transform:scaleX(0.9665)">(jmsanzgonzalez3001@gmail.com)</span></div>
<div class="t " style="left:20.60px;top:91px;font-size:13.33px;font-weight:bold;word-spacing:-0.380px;"><span style="width:42.342px;transform:scaleX(0.9321)">DATOS</span> <span style="width:70.911px;transform:scaleX(0.8548)">GENERALES</span> <span style="width:7.637px;transform:scaleX(0.8590)">Y</span> <span style="width:16.438px;transform:scaleX(0.8877)">DE</span> <span style="width:39.162px;transform:scaleX(0.9614)">INICIO</span> <span style="width:16.438px;transform:scaleX(0.8877)">DE</span> <span style="width:79.760px;transform:scaleX(0.9448)">SIMULACIÓN</span></div>
<div class="t " style="left:20.60px;top:111px;font-size:13.33px;font-weight:bold;word-spacing:-0.380px;"><span style="width:82.509px;transform:scaleX(0.8912)">DESCRIPCION</span></div>
<div class="t " style="left:115.60px;top:111px;font-size:13.33px;font-weight:bold;word-spacing:-0.272px;"><span style="width:63.439px;transform:scaleX(0.9411)">Colisiones</span> <span style="width:52.929px;transform:scaleX(0.9397)">sencillas</span></div>
<div class="t " style="left:349.60px;top:111px;font-size:13.33px;font-weight:bold;word-spacing:-0.380px;"><span style="width:27.865px;transform:scaleX(0.8751)">COL.</span> <span style="width:45.580px;transform:scaleX(0.9469)">FONDO</span></div>
<div class="t " style="left:505.60px;top:111px;font-size:13.33px;font-weight:bold;word-spacing:-0.380px;"><span style="width:46.713px;transform:scaleX(0.8799)">TEXTOS</span></div>
<div class="t " style="left:20.60px;top:131px;font-size:13.33px;font-weight:bold;word-spacing:-0.380px;"><span style="width:75.770px;transform:scaleX(0.9080)">DIRECTORIO</span></div>
<div class="t " style="left:115.60px;top:131px;font-size:13.33px;word-spacing:-0.261px;"><span style="width:61.400px;transform:scaleX(1.1350)">D:\3dppt\</span></div>
<div class="t " style="left:193.60px;top:131px;font-size:13.33px;font-weight:bold;word-spacing:-0.380px;"><span style="width:33.750px;transform:scaleX(0.9299)">TEXT.</span> <span style="width:39.873px;transform:scaleX(0.8683)">SUELO</span></div>
<div class="t " style="left:349.60px;top:131px;font-size:13.33px;font-weight:bold;word-spacing:-0.380px;"><span style="width:45.931px;transform:scaleX(0.8381)">ESCALA</span> <span style="width:10.674px;transform:scaleX(1.0293)">F.</span></div>
<div class="t " style="left:505.60px;top:131px;font-size:13.33px;font-weight:bold;word-spacing:-0.380px;"><span style="width:60.747px;transform:scaleX(0.9114)">VOLCADO</span></div>
<div class="t " style="left:20.60px;top:151px;font-size:13.33px;font-weight:bold;word-spacing:-0.380px;"><span style="width:73.358px;transform:scaleX(0.9558)">TAM.TRAZA</span></div>
<div class="t " style="left:153.73px;top:151px;font-size:13.33px;word-spacing:-0.306px;"><span style="width:34.972px;transform:scaleX(0.9434)">10000</span></div>
<div class="t " style="left:193.60px;top:151px;font-size:13.33px;font-weight:bold;word-spacing:-0.380px;"><span style="width:71.162px;transform:scaleX(0.9065)">VELOCIDAD</span></div>
<div class="t " style="left:330.71px;top:151px;font-size:13.33px;word-spacing:-0.306px;"><span style="width:13.989px;transform:scaleX(0.9434)">95</span></div>
<div class="t " style="left:349.60px;top:151px;font-size:13.33px;font-weight:bold;word-spacing:-0.380px;"><span style="width:77.356px;transform:scaleX(0.9108)">SEGMENTOS</span></div>
<div class="t " style="left:505.60px;top:151px;font-size:13.33px;font-weight:bold;word-spacing:-0.380px;"><span style="width:32.961px;transform:scaleX(1.0435)">TAM.</span> <span style="width:30.083px;transform:scaleX(0.7960)">EJES.</span></div>
<div class="t " style="left:661.60px;top:151px;font-size:13.33px;font-weight:bold;word-spacing:-0.380px;"><span style="width:42.156px;transform:scaleX(0.8758)">COLOR</span> <span style="width:25.043px;transform:scaleX(0.9220)">PTO</span></div>
<div class="t " style="left:739.60px;top:151px;font-size:13.33px;word-spacing:-0.299px;"><span style="width:56.700px;transform:scaleX(0.9109)">0XFF0000</span></div>
<div class="t " style="left:817.60px;top:151px;font-size:13.33px;font-weight:bold;word-spacing:-0.380px;"><span style="width:32.961px;transform:scaleX(1.0435)">TAM.</span> <span style="width:25.043px;transform:scaleX(0.9220)">PTO</span></div>
<div class="t " style="left:954.71px;top:151px;font-size:13.33px;word-spacing:-0.306px;"><span style="width:13.989px;transform:scaleX(0.9434)">10</span></div>
<div class="t " style="left:20.60px;top:171px;font-size:13.33px;font-weight:bold;word-spacing:-0.380px;"><span style="width:53.124px;transform:scaleX(0.9357)">PARADO</span></div>
<div class="t " style="left:193.60px;top:171px;font-size:13.33px;font-weight:bold;word-spacing:-0.380px;"><span style="width:62.110px;transform:scaleX(0.9116)">SOMBRAS</span></div>
<div class="t " style="left:349.60px;top:171px;font-size:13.33px;font-weight:bold;word-spacing:-0.380px;"><span style="width:53.044px;transform:scaleX(0.8427)">FLECHAS</span></div>
<div class="t " style="left:505.60px;top:171px;font-size:13.33px;font-weight:bold;word-spacing:-0.380px;"><span style="width:39.873px;transform:scaleX(0.8683)">SUELO</span></div>
<div class="clip" style="left:660px;top:169px;width:77px;height:22px">
<div class="t " style="left:1.60px;top:2px;font-size:13.33px;font-weight:bold;word-spacing:-0.380px;"><span style="width:82.029px;transform:scaleX(0.8721)">COLORSUELO</span></div>
</div>
<div class="t " style="left:739.60px;top:171px;font-size:13.33px;word-spacing:-0.201px;"><span style="width:67.700px;transform:scaleX(1.0041)">0xAAAAAA</span></div>
<div class="t " style="left:817.60px;top:171px;font-size:13.33px;font-weight:bold;word-spacing:-0.380px;"><span style="width:63.295px;transform:scaleX(0.9532)">T.PARADA</span></div>
<div class="t " style="left:20.60px;top:213px;font-size:13.33px;font-weight:bold;word-spacing:-0.380px;"><span style="width:42.342px;transform:scaleX(0.9321)">DATOS</span> <span style="width:16.438px;transform:scaleX(0.8877)">DE</span> <span style="width:59.956px;transform:scaleX(0.9199)">POSICIÓN</span> <span style="width:16.438px;transform:scaleX(0.8877)">DE</span> <span style="width:55.629px;transform:scaleX(0.9391)">CÁMARA</span></div>
<div class="t " style="left:20.60px;top:233px;font-size:13.33px;word-spacing:-0.292px;"><span style="width:41.995px;transform:scaleX(1.0496)">Indicar</span> <span style="width:50.985px;transform:scaleX(1.0425)">posición</span> <span style="width:15.438px;transform:scaleX(1.0412)">de</span> <span style="width:10.692px;transform:scaleX(1.0305)">la</span> <span style="width:49.151px;transform:scaleX(1.0207)">cámara,</span> <span style="width:7.958px;transform:scaleX(1.0735)">o</span> <span style="width:14.303px;transform:scaleX(1.1645)">n<i>º</i></span> <span style="width:15.438px;transform:scaleX(1.0412)">de</span> <span style="width:36.586px;transform:scaleX(1.0731)">orden</span> <span style="width:18.901px;transform:scaleX(1.0625)">del</span> <span style="width:40.020px;transform:scaleX(1.1019)">objeto</span> <span style="width:15.438px;transform:scaleX(1.0412)">en</span> <span style="width:10.972px;transform:scaleX(1.0575)">el</span> <span style="width:23.367px;transform:scaleX(1.0506)">que</span> <span style="width:13.412px;transform:scaleX(0.9526)">se</span> <span style="width:29.579px;transform:scaleX(1.0505)">sitúa</span> <span style="width:6.831px;transform:scaleX(1.0249)">y</span> <span style="width:10.692px;transform:scaleX(1.0305)">al</span> <span style="width:23.367px;transform:scaleX(1.0506)">que</span> <span style="width:25.696px;transform:scaleX(1.0198)">está</span> <span style="width:55.635px;transform:scaleX(1.0727)">mirando.</span></div>
<div class="t " style="left:115.60px;top:253px;font-size:13.33px;font-weight:bold;word-spacing:-0.380px;"><span style="width:40.131px;transform:scaleX(0.9027)">POS_X</span></div>
<div class="t " style="left:193.60px;top:253px;font-size:13.33px;font-weight:bold;word-spacing:-0.380px;"><span style="width:39.672px;transform:scaleX(0.8924)">POS_Y</span></div>
<div class="t " style="left:271.60px;top:253px;font-size:13.33px;font-weight:bold;word-spacing:-0.380px;"><span style="width:39.062px;transform:scaleX(0.8937)">POS_Z</span></div>
<div class="t " style="left:349.60px;top:253px;font-size:13.33px;font-weight:bold;word-spacing:-0.380px;"><span style="width:41.632px;transform:scaleX(0.9693)">AUDIO</span></div>
<div class="t " style="left:817.60px;top:253px;font-size:13.33px;font-weight:bold;word-spacing:-0.380px;"><span style="width:62.842px;transform:scaleX(0.9868)">MIRANDO</span> <span style="width:8.096px;transform:scaleX(0.9106)">X</span></div>
<div class="t " style="left:895.60px;top:253px;font-size:13.33px;font-weight:bold;word-spacing:-0.380px;"><span style="width:62.842px;transform:scaleX(0.9868)">MIRANDO</span> <span style="width:7.637px;transform:scaleX(0.8590)">Y</span></div>
<div class="clip" style="left:972px;top:251px;width:76px;height:21px">
<div class="t " style="left:1.60px;top:2px;font-size:13.33px;font-weight:bold;word-spacing:-0.380px;"><span style="width:62.842px;transform:scaleX(0.9868)">MIRANDO</span> <span style="width:7.027px;transform:scaleX(0.8630)">Z</span></div>
</div>
<div class="t " style="left:20.60px;top:273px;font-size:13.33px;font-weight:bold;word-spacing:-0.380px;"><span style="width:55.629px;transform:scaleX(0.9391)">CAMARA</span></div>
<div class="t " style="left:160.72px;top:273px;font-size:13.33px;word-spacing:-0.306px;"><span style="width:27.977px;transform:scaleX(0.9434)">1500</span></div>
<div class="t " style="left:259.71px;top:273px;font-size:13.33px;word-spacing:-0.306px;"><span style="width:6.994px;transform:scaleX(0.9434)">0</span></div>
<div class="t " style="left:316.72px;top:273px;font-size:13.33px;word-spacing:-0.306px;"><span style="width:27.977px;transform:scaleX(0.9434)">1300</span></div>
<div class="t " style="left:349.60px;top:273px;font-size:13.33px;font-weight:bold;word-spacing:-0.380px;"><span style="width:16.854px;transform:scaleX(0.9101)">EN</span> <span style="width:47.439px;transform:scaleX(0.8693)">OBJETO</span></div>
<div class="t " style="left:505.60px;top:273px;font-size:13.33px;font-weight:bold;word-spacing:-0.380px;"><span style="width:62.842px;transform:scaleX(0.9868)">MIRANDO</span> <span style="width:8.908px;transform:scaleX(0.9253)">A</span></div>
<div class="t " style="left:661.60px;top:273px;font-size:13.33px;font-weight:bold;word-spacing:-0.380px;"><span style="width:44.137px;transform:scaleX(0.8895)">NIEBLA</span></div>
<div class="t " style="left:862.72px;top:273px;font-size:13.33px;word-spacing:-0.306px;"><span style="width:27.977px;transform:scaleX(0.9434)">1500</span></div>
<div class="t " style="left:961.71px;top:273px;font-size:13.33px;word-spacing:-0.306px;"><span style="width:6.994px;transform:scaleX(0.9434)">0</span></div>
<div class="t " style="left:1039.71px;top:273px;font-size:13.33px;word-spacing:-0.306px;"><span style="width:6.994px;transform:scaleX(0.9434)">0</span></div>
<div class="t " style="left:20.60px;top:315px;font-size:13.33px;font-weight:bold;word-spacing:-0.380px;"><span style="width:42.342px;transform:scaleX(0.9321)">DATOS</span> <span style="width:16.438px;transform:scaleX(0.8877)">DE</span> <span style="width:15.124px;transform:scaleX(0.8511)">LA</span> <span style="width:79.760px;transform:scaleX(0.9448)">SIMULACIÓN</span> <span style="width:38.222px;transform:scaleX(0.8747)">FÍSICA</span></div>
<div class="clip" style="left:19px;top:333px;width:1028px;height:22px">
<div class="t " style="left:1.60px;top:2px;font-size:13.33px;word-spacing:-0.299px;"><span style="width:28.883px;transform:scaleX(0.9285)">TIPO</span> <span style="width:11.037px;transform:scaleX(0.9928)">0:</span> <span style="width:34.281px;transform:scaleX(1.0276)">nada;</span> <span style="width:11.037px;transform:scaleX(0.9928)">1:</span> <span style="width:30.384px;transform:scaleX(1.0253)">grav;</span> <span style="width:7.008px;transform:scaleX(0.9453)">2</span> <span style="width:6.817px;transform:scaleX(1.0228)">y</span> <span style="width:57.172px;transform:scaleX(1.0152)">5:elastica</span> <span style="width:26.788px;transform:scaleX(1.0330)">(con</span> <span style="width:141.374px;transform:scaleX(1.0543)">min);3:electrostatica;4:</span> <span style="width:56.885px;transform:scaleX(1.0234)">gravedad</span> <span style="width:49.781px;transform:scaleX(1.0838)">limitada</span> <span style="width:7.214px;transform:scaleX(0.9730)">a</span> <span style="width:12.206px;transform:scaleX(0.9157)">R;</span> <span style="width:58.362px;transform:scaleX(0.9162)">VECINOS:</span> <span style="width:14.743px;transform:scaleX(0.9046)">SI:</span> <span style="width:55.223px;transform:scaleX(1.0650)">primeros</span> <span style="width:49.892px;transform:scaleX(1.0202)">vecinos;</span> <span style="width:23.721px;transform:scaleX(1.0009)">NO:</span> <span style="width:61.532px;transform:scaleX(0.9886)">todos;SIC:</span> <span style="width:55.223px;transform:scaleX(1.0650)">primeros</span> <span style="width:45.863px;transform:scaleX(1.0147)">vecinos</span> <span style="width:87.989px;transform:scaleX(0.9579)">ciclico;SI2:RED</span> <span style="width:16.273px;transform:scaleX(0.9550)">2D</span></div>
</div>
<div class="t " style="left:20.60px;top:356px;font-size:13.33px;font-weight:bold;word-spacing:-0.380px;"><span style="width:72.468px;transform:scaleX(0.8814)">COLISIONES</span></div>
<div class="t " style="left:115.60px;top:356px;font-size:13.33px;word-spacing:-0.306px;"><span style="width:10.693px;transform:scaleX(0.8490)">SI</span></div>
<div class="t " style="left:193.60px;top:356px;font-size:13.33px;font-weight:bold;word-spacing:-0.380px;"><span style="width:63.424px;transform:scaleX(0.9343)">TAM.CAJA</span></div>
<div class="t " style="left:349.60px;top:356px;font-size:13.33px;font-weight:bold;word-spacing:-0.380px;"><span style="width:10.142px;transform:scaleX(0.8562)">L.</span> <span style="width:50.604px;transform:scaleX(0.9110)">RIGIDAS</span></div>
<div class="t " style="left:661.60px;top:356px;font-size:13.33px;word-spacing:-0.302px;"><span style="width:54.247px;transform:scaleX(1.0613)">fórmulas</span> <span style="width:22.204px;transform:scaleX(1.0331)">con</span> <span style="width:49.978px;transform:scaleX(1.1059)">formato</span> <span style="width:58.707px;transform:scaleX(1.0427)">javascript</span> <span style="width:22.204px;transform:scaleX(1.0331)">con</span> <span style="width:99.854px;transform:scaleX(0.9469)">X,Y,Z,VX,VY,VZ,T</span> <span style="width:49.993px;transform:scaleX(1.0073)">maýusc.</span></div>
<div class="t " style="left:20.60px;top:376px;font-size:13.33px;font-weight:bold;word-spacing:-0.380px;"><span style="width:28.962px;transform:scaleX(0.9311)">TIPO</span> <span style="width:47.726px;transform:scaleX(0.8829)">FUERZA</span></div>
<div class="t " style="left:193.60px;top:376px;font-size:13.33px;font-weight:bold;word-spacing:-0.380px;"><span style="width:54.136px;transform:scaleX(0.9023)">VECINOS</span></div>
<div class="t " style="left:349.60px;top:376px;font-size:13.33px;font-weight:bold;word-spacing:-0.380px;"><span style="width:29.034px;transform:scaleX(1.0412)">TAM</span> <span style="width:24.714px;transform:scaleX(0.8781)">RED</span> <span style="width:16.616px;transform:scaleX(0.9751)">2D</span></div>
<div class="t " style="left:583.60px;top:376px;font-size:13.33px;font-weight:bold;word-spacing:-0.322px;"><span style="width:55.300px;transform:scaleX(0.9573)">FX(X,Y,Z)</span></div>
<div class="t " style="left:661.60px;top:376px;font-size:13.33px;word-spacing:-0.243px;"><span style="width:135.100px;transform:scaleX(0.9936)">(X&gt;1000)?(-0.01*VX):0</span></div>
<div class="t " style="left:20.60px;top:396px;font-size:13.33px;font-weight:bold;word-spacing:-0.380px;"><span style="width:74.515px;transform:scaleX(0.9580)">GRAV.VERT.</span></div>
<div class="t " style="left:193.60px;top:396px;font-size:13.33px;font-weight:bold;word-spacing:-0.380px;"><span style="width:30.377px;transform:scaleX(1.0796)">MIN.</span> <span style="width:40.447px;transform:scaleX(0.8808)">ELAST.</span></div>
<div class="t " style="left:349.60px;top:396px;font-size:13.33px;font-weight:bold;word-spacing:-0.380px;"><span style="width:22.983px;transform:scaleX(1.0014)">LIM</span> <span style="width:29.034px;transform:scaleX(1.0412)">TAM</span></div>
<div class="t " style="left:583.60px;top:396px;font-size:13.33px;font-weight:bold;word-spacing:-0.293px;"><span style="width:55.300px;transform:scaleX(0.9573)">FY(X,Y,Z)</span></div>
<div class="t " style="left:20.60px;top:416px;font-size:13.33px;font-weight:bold;word-spacing:-0.380px;"><span style="width:58.047px;transform:scaleX(0.9010)">FRICCION</span></div>
<div class="t " style="left:193.60px;top:416px;font-size:13.33px;font-weight:bold;word-spacing:-0.380px;"><span style="width:56.038px;transform:scaleX(0.9117)">DIR.FRIC.</span></div>
<div class="t " style="left:271.60px;top:416px;font-size:13.33px;word-spacing:-0.306px;"><span style="width:22.164px;transform:scaleX(0.8549)">XYZ</span></div>
<div class="t " style="left:349.60px;top:416px;font-size:13.33px;font-weight:bold;word-spacing:-0.314px;"><span style="width:125.400px;transform:scaleX(0.9511)">(X,Y,Z,XY,XZ,YZ,XYZ)</span></div>
<div class="t " style="left:583.60px;top:416px;font-size:13.33px;font-weight:bold;word-spacing:-0.272px;"><span style="width:55.000px;transform:scaleX(0.9646)">FZ(X,Y,Z)</span></div>
<div class="t " style="left:20.60px;top:457px;font-size:13.33px;word-spacing:-0.312px;"><span style="width:27.912px;transform:scaleX(0.9918)">Usar</span> <span style="width:36.586px;transform:scaleX(1.0967)">punto</span> <span style="width:15.348px;transform:scaleX(1.0351)">en</span> <span style="width:30.806px;transform:scaleX(1.0393)">lugar</span> <span style="width:15.348px;transform:scaleX(1.0351)">de</span> <span style="width:33.429px;transform:scaleX(1.0255)">coma</span> <span style="width:27.488px;transform:scaleX(1.0303)">para</span> <span style="width:65.100px;transform:scaleX(1.0217)">decimales;</span> <span style="width:27.488px;transform:scaleX(1.0303)">para</span> <span style="width:39.465px;transform:scaleX(0.9348)">CUBO,</span> <span style="width:58.506px;transform:scaleX(1.0255)">columnas</span> <span style="width:37.085px;transform:scaleX(0.9817)">MASA</span> <span style="width:6.791px;transform:scaleX(1.0190)">y</span> <span style="width:7.795px;transform:scaleX(0.8767)">K</span> <span style="width:21.663px;transform:scaleX(1.0079)">son</span> <span style="width:57.063px;transform:scaleX(1.0407)">tamaños;</span> <span style="width:36.374px;transform:scaleX(1.0669)">poner</span> <span style="width:45.656px;transform:scaleX(1.0621)">objetos</span> <span style="width:35.781px;transform:scaleX(0.9287)">LINEA</span> <span style="width:10.630px;transform:scaleX(1.0245)">al</span> <span style="width:26.535px;transform:scaleX(1.0851)">final</span> <span style="width:15.348px;transform:scaleX(1.0351)">de</span> <span style="width:10.630px;transform:scaleX(1.0245)">la</span> <span style="width:24.967px;transform:scaleX(1.0532)">lista</span> <span style="width:53.085px;transform:scaleX(1.0385)">siempre,</span> <span style="width:7.465px;transform:scaleX(1.0070)">e</span> <span style="width:41.414px;transform:scaleX(1.0546)">indicar</span> <span style="width:14.220px;transform:scaleX(1.1578)">n<i>º</i></span> <span style="width:36.374px;transform:scaleX(1.0669)">orden</span> <span style="width:39.788px;transform:scaleX(1.0955)">objeto</span> <span style="width:27.378px;transform:scaleX(1.1270)">&quot;de&quot;</span> <span style="width:19.217px;transform:scaleX(1.1386)">&quot;a&quot;</span> <span style="width:15.348px;transform:scaleX(1.0351)">en</span> <span style="width:58.506px;transform:scaleX(1.0255)">columnas</span> <span style="width:39.839px;transform:scaleX(0.8962)">POS_X</span> <span style="width:6.791px;transform:scaleX(1.0190)">y</span> <span style="width:39.363px;transform:scaleX(0.8854)">POS_Y</span></div>
<div class="t " style="left:20.60px;top:477px;font-size:13.33px;font-weight:bold;word-spacing:-0.380px;"><span style="width:16.079px;transform:scaleX(1.1092)">N<i>º</i></span> <span style="width:44.338px;transform:scaleX(0.9210)">ORDEN</span></div>
<div class="clip" style="left:114px;top:475px;width:77px;height:21px">
<div class="t " style="left:1.60px;top:2px;font-size:13.33px;font-weight:bold;word-spacing:-0.380px;"><span style="width:28.962px;transform:scaleX(0.9311)">TIPO</span> <span style="width:43.928px;transform:scaleX(0.9269)">(CUBO,</span></div>
</div>
<div class="t " style="left:193.60px;top:477px;font-size:13.33px;font-weight:bold;word-spacing:-0.380px;"><span style="width:40.131px;transform:scaleX(0.9027)">POS_X</span> <span style="margin-left:0.936px;width:5.380px;transform:scaleX(1.2000)">/</span> <span style="width:16.438px;transform:scaleX(0.8877)">DE</span></div>
<div class="t " style="left:271.60px;top:477px;font-size:13.33px;font-weight:bold;word-spacing:-0.334px;"><span style="width:40.224px;transform:scaleX(0.9048)">POS_Y</span> <span style="margin-left:0.980px;width:5.424px;transform:scaleX(1.2000)">/</span> <span style="width:9.032px;transform:scaleX(0.9382)">A</span></div>
<div class="t " style="left:349.60px;top:477px;font-size:13.33px;font-weight:bold;word-spacing:-0.380px;"><span style="width:39.062px;transform:scaleX(0.8937)">POS_Z</span></div>
<div class="t " style="left:427.60px;top:477px;font-size:13.33px;font-weight:bold;word-spacing:-0.380px;"><span style="width:72.984px;transform:scaleX(0.9888)">TAMAÑO_X</span></div>
<div class="t " style="left:505.60px;top:477px;font-size:13.33px;font-weight:bold;word-spacing:-0.380px;"><span style="width:75.561px;transform:scaleX(1.0201)">MASA/tam_</span></div>
<div class="t " style="left:583.60px;top:477px;font-size:13.33px;font-weight:bold;word-spacing:-0.380px;"><span style="width:51.831px;transform:scaleX(1.0140)">K/tam_z</span></div>
<div class="clip" style="left:660px;top:475px;width:77px;height:21px">
<div class="t " style="left:1.60px;top:2px;font-size:13.33px;font-weight:bold;word-spacing:-0.380px;"><span style="width:81.146px;transform:scaleX(0.9391)">ROTACION_X</span></div>
</div>
<div class="clip" style="left:738px;top:475px;width:77px;height:21px">
<div class="t " style="left:1.60px;top:2px;font-size:13.33px;font-weight:bold;word-spacing:-0.380px;"><span style="width:80.686px;transform:scaleX(0.9338)">ROTACION_Y</span></div>
</div>
<div class="clip" style="left:816px;top:475px;width:77px;height:21px">
<div class="t " style="left:1.60px;top:2px;font-size:13.33px;font-weight:bold;word-spacing:-0.380px;"><span style="width:80.077px;transform:scaleX(0.9348)">ROTACION_Z</span></div>
</div>
<div class="t " style="left:895.60px;top:477px;font-size:13.33px;font-weight:bold;word-spacing:-0.380px;"><span style="width:57.753px;transform:scaleX(0.8861)">COLOR_R</span></div>
<div class="t " style="left:973.60px;top:477px;font-size:13.33px;font-weight:bold;word-spacing:-0.380px;"><span style="width:58.844px;transform:scaleX(0.8927)">COLOR_G</span></div>
<div class="t " style="left:1051.60px;top:477px;font-size:13.33px;font-weight:bold;word-spacing:-0.380px;"><span style="width:57.717px;transform:scaleX(0.8856)">COLOR_B</span></div>
<div class="t " style="left:1120.60px;top:477px;font-size:13.33px;font-weight:bold;word-spacing:-0.380px;"><span style="width:16.789px;transform:scaleX(0.9442)">VX</span></div>
<div class="t " style="left:1189.60px;top:477px;font-size:13.33px;font-weight:bold;word-spacing:-0.380px;"><span style="width:16.330px;transform:scaleX(0.9183)">VY</span></div>
<div class="t " style="left:1258.60px;top:477px;font-size:13.33px;font-weight:bold;word-spacing:-0.380px;"><span style="width:15.720px;transform:scaleX(0.9229)">VZ</span></div>
<div class="t " style="left:1327.60px;top:477px;font-size:13.33px;font-weight:bold;word-spacing:-0.380px;"><span style="width:40.397px;transform:scaleX(0.8944)">TRAZA</span> <span style="width:21.763px;transform:scaleX(1.0494)">(SI/</span> <span style="width:24.204px;transform:scaleX(0.9906)">NO)</span></div>
<div class="t " style="left:103.71px;top:497px;font-size:13.33px;word-spacing:-0.306px;"><span style="width:6.994px;transform:scaleX(0.9434)">1</span></div>
<div class="t " style="left:115.60px;top:497px;font-size:13.33px;word-spacing:-0.306px;"><span style="width:44.385px;transform:scaleX(0.9563)">PUNTO</span></div>
<div class="t " style="left:241.12px;top:497px;font-size:13.33px;word-spacing:-0.306px;"><span style="width:25.585px;transform:scaleX(0.9589)">-100</span></div>
<div class="t " style="left:337.71px;top:497px;font-size:13.33px;word-spacing:-0.306px;"><span style="width:6.994px;transform:scaleX(0.9434)">0</span></div>
<div class="t " style="left:415.71px;top:497px;font-size:13.33px;word-spacing:-0.306px;"><span style="width:6.994px;transform:scaleX(0.9434)">0</span></div>
<div class="t " style="left:486.71px;top:497px;font-size:13.33px;word-spacing:-0.306px;"><span style="width:13.989px;transform:scaleX(0.9434)">20</span></div>
<div class="t " style="left:571.71px;top:497px;font-size:13.33px;word-spacing:-0.306px;"><span style="width:6.994px;transform:scaleX(0.9434)">1</span></div>
<div class="t " style="left:727.71px;top:497px;font-size:13.33px;word-spacing:-0.306px;"><span style="width:6.994px;transform:scaleX(0.9434)">0</span></div>
<div class="t " style="left:805.71px;top:497px;font-size:13.33px;word-spacing:-0.306px;"><span style="width:6.994px;transform:scaleX(0.9434)">0</span></div>
<div class="t " style="left:883.71px;top:497px;font-size:13.33px;word-spacing:-0.306px;"><span style="width:6.994px;transform:scaleX(0.9434)">0</span></div>
<div class="t " style="left:947.72px;top:497px;font-size:13.33px;word-spacing:-0.306px;"><span style="width:20.983px;transform:scaleX(0.9434)">255</span></div>
<div class="t " style="left:1039.71px;top:497px;font-size:13.33px;word-spacing:-0.306px;"><span style="width:6.994px;transform:scaleX(0.9434)">0</span></div>
<div class="t " style="left:1108.71px;top:497px;font-size:13.33px;word-spacing:-0.306px;"><span style="width:6.994px;transform:scaleX(0.9434)">0</span></div>
<div class="t " style="left:1246.71px;top:497px;font-size:13.33px;word-spacing:-0.306px;"><span style="width:6.994px;transform:scaleX(0.9434)">0</span></div>
<div class="t " style="left:1315.71px;top:497px;font-size:13.33px;word-spacing:-0.306px;"><span style="width:6.994px;transform:scaleX(0.9434)">0</span></div>
<div class="t " style="left:1327.60px;top:497px;font-size:13.33px;word-spacing:-0.306px;"><span style="width:10.693px;transform:scaleX(0.8490)">SI</span></div>
<div class="t " style="left:103.71px;top:517px;font-size:13.33px;word-spacing:-0.306px;"><span style="width:6.994px;transform:scaleX(0.9434)">2</span></div>
<div class="t " style="left:115.60px;top:517px;font-size:13.33px;word-spacing:-0.306px;"><span style="width:44.385px;transform:scaleX(0.9563)">PUNTO</span></div>
<div class="t " style="left:241.12px;top:517px;font-size:13.33px;word-spacing:-0.306px;"><span style="width:25.585px;transform:scaleX(0.9589)">-100</span></div>
<div class="t " style="left:337.71px;top:517px;font-size:13.33px;word-spacing:-0.306px;"><span style="width:6.994px;transform:scaleX(0.9434)">0</span></div>
<div class="t " style="left:415.71px;top:517px;font-size:13.33px;word-spacing:-0.306px;"><span style="width:6.994px;transform:scaleX(0.9434)">0</span></div>
<div class="t " style="left:486.71px;top:517px;font-size:13.33px;word-spacing:-0.306px;"><span style="width:13.989px;transform:scaleX(0.9434)">20</span></div>
<div class="t " style="left:571.71px;top:517px;font-size:13.33px;word-spacing:-0.306px;"><span style="width:6.994px;transform:scaleX(0.9434)">1</span></div>
<div class="t " style="left:727.71px;top:517px;font-size:13.33px;word-spacing:-0.306px;"><span style="width:6.994px;transform:scaleX(0.9434)">0</span></div>
<div class="t " style="left:805.71px;top:517px;font-size:13.33px;word-spacing:-0.306px;"><span style="width:6.994px;transform:scaleX(0.9434)">0</span></div>
<div class="t " style="left:883.71px;top:517px;font-size:13.33px;word-spacing:-0.306px;"><span style="width:6.994px;transform:scaleX(0.9434)">0</span></div>
<div class="t " style="left:947.72px;top:517px;font-size:13.33px;word-spacing:-0.306px;"><span style="width:20.983px;transform:scaleX(0.9434)">255</span></div>
<div class="t " style="left:1039.71px;top:517px;font-size:13.33px;word-spacing:-0.306px;"><span style="width:6.994px;transform:scaleX(0.9434)">0</span></div>
<div class="t " style="left:1108.71px;top:517px;font-size:13.33px;word-spacing:-0.306px;"><span style="width:6.994px;transform:scaleX(0.9434)">0</span></div>
<div class="t " style="left:1246.71px;top:517px;font-size:13.33px;word-spacing:-0.306px;"><span style="width:6.994px;transform:scaleX(0.9434)">0</span></div>
<div class="t " style="left:1315.71px;top:517px;font-size:13.33px;word-spacing:-0.306px;"><span style="width:6.994px;transform:scaleX(0.9434)">0</span></div>
<div class="t " style="left:1327.60px;top:517px;font-size:13.33px;word-spacing:-0.306px;"><span style="width:10.693px;transform:scaleX(0.8490)">SI</span></div>
<div class="t " style="left:103.71px;top:537px;font-size:13.33px;word-spacing:-0.306px;"><span style="width:6.994px;transform:scaleX(0.9434)">3</span></div>
<div class="t " style="left:115.60px;top:537px;font-size:13.33px;word-spacing:-0.306px;"><span style="width:44.385px;transform:scaleX(0.9563)">PUNTO</span></div>
<div class="t " style="left:241.12px;top:537px;font-size:13.33px;word-spacing:-0.306px;"><span style="width:25.585px;transform:scaleX(0.9589)">-100</span></div>
<div class="t " style="left:337.71px;top:537px;font-size:13.33px;word-spacing:-0.306px;"><span style="width:6.994px;transform:scaleX(0.9434)">0</span></div>
<div class="t " style="left:415.71px;top:537px;font-size:13.33px;word-spacing:-0.306px;"><span style="width:6.994px;transform:scaleX(0.9434)">0</span></div>
<div class="t " style="left:486.71px;top:537px;font-size:13.33px;word-spacing:-0.306px;"><span style="width:13.989px;transform:scaleX(0.9434)">20</span></div>
<div class="t " style="left:571.71px;top:537px;font-size:13.33px;word-spacing:-0.306px;"><span style="width:6.994px;transform:scaleX(0.9434)">1</span></div>
<div class="t " style="left:727.71px;top:537px;font-size:13.33px;word-spacing:-0.306px;"><span style="width:6.994px;transform:scaleX(0.9434)">0</span></div>
<div class="t " style="left:805.71px;top:537px;font-size:13.33px;word-spacing:-0.306px;"><span style="width:6.994px;transform:scaleX(0.9434)">0</span></div>
<div class="t " style="left:883.71px;top:537px;font-size:13.33px;word-spacing:-0.306px;"><span style="width:6.994px;transform:scaleX(0.9434)">0</span></div>
<div class="t " style="left:947.72px;top:537px;font-size:13.33px;word-spacing:-0.306px;"><span style="width:20.983px;transform:scaleX(0.9434)">255</span></div>
<div class="t " style="left:1039.71px;top:537px;font-size:13.33px;word-spacing:-0.306px;"><span style="width:6.994px;transform:scaleX(0.9434)">0</span></div>
<div class="t " style="left:1108.71px;top:537px;font-size:13.33px;word-spacing:-0.306px;"><span style="width:6.994px;transform:scaleX(0.9434)">0</span></div>
<div class="t " style="left:1246.71px;top:537px;font-size:13.33px;word-spacing:-0.306px;"><span style="width:6.994px;transform:scaleX(0.9434)">0</span></div>
<div class="t " style="left:1315.71px;top:537px;font-size:13.33px;word-spacing:-0.306px;"><span style="width:6.994px;transform:scaleX(0.9434)">0</span></div>
<div class="t " style="left:1327.60px;top:537px;font-size:13.33px;word-spacing:-0.306px;"><span style="width:10.693px;transform:scaleX(0.8490)">SI</span></div>
<div class="t " style="left:103.71px;top:557px;font-size:13.33px;word-spacing:-0.306px;"><span style="width:6.994px;transform:scaleX(0.9434)">4</span></div>
<div class="t " style="left:115.60px;top:557px;font-size:13.33px;word-spacing:-0.306px;"><span style="width:44.385px;transform:scaleX(0.9563)">PUNTO</span></div>
<div class="t " style="left:241.12px;top:557px;font-size:13.33px;word-spacing:-0.306px;"><span style="width:25.585px;transform:scaleX(0.9589)">-100</span></div>
<div class="t " style="left:337.71px;top:557px;font-size:13.33px;word-spacing:-0.306px;"><span style="width:6.994px;transform:scaleX(0.9434)">0</span></div>
<div class="t " style="left:415.71px;top:557px;font-size:13.33px;word-spacing:-0.306px;"><span style="width:6.994px;transform:scaleX(0.9434)">0</span></div>
<div class="t " style="left:486.71px;top:557px;font-size:13.33px;word-spacing:-0.306px;"><span style="width:13.989px;transform:scaleX(0.9434)">20</span></div>
<div class="t " style="left:571.71px;top:557px;font-size:13.33px;word-spacing:-0.306px;"><span style="width:6.994px;transform:scaleX(0.9434)">1</span></div>
<div class="t " style="left:727.71px;top:557px;font-size:13.33px;word-spacing:-0.306px;"><span style="width:6.994px;transform:scaleX(0.9434)">0</span></div>
<div class="t " style="left:805.71px;top:557px;font-size:13.33px;word-spacing:-0.306px;"><span style="width:6.994px;transform:scaleX(0.9434)">0</span></div>
<div class="t " style="left:883.71px;top:557px;font-size:13.33px;word-spacing:-0.306px;"><span style="width:6.994px;transform:scaleX(0.9434)">0</span></div>
<div class="t " style="left:947.72px;top:557px;font-size:13.33px;word-spacing:-0.306px;"><span style="width:20.983px;transform:scaleX(0.9434)">255</span></div>
<div class="t " style="left:1039.71px;top:557px;font-size:13.33px;word-spacing:-0.306px;"><span style="width:6.994px;transform:scaleX(0.9434)">0</span></div>
<div class="t " style="left:1108.71px;top:557px;font-size:13.33px;word-spacing:-0.306px;"><span style="width:6.994px;transform:scaleX(0.9434)">0</span></div>
<div class="t " style="left:1246.71px;top:557px;font-size:13.33px;word-spacing:-0.306px;"><span style="width:6.994px;transform:scaleX(0.9434)">0</span></div>
<div class="t " style="left:1315.71px;top:557px;font-size:13.33px;word-spacing:-0.306px;"><span style="width:6.994px;transform:scaleX(0.9434)">0</span></div>
<div class="t " style="left:1327.60px;top:557px;font-size:13.33px;word-spacing:-0.306px;"><span style="width:10.693px;transform:scaleX(0.8490)">SI</span></div>
<div class="t " style="left:103.71px;top:577px;font-size:13.33px;word-spacing:-0.306px;"><span style="width:6.994px;transform:scaleX(0.9434)">5</span></div>
<div class="t " style="left:115.60px;top:577px;font-size:13.33px;word-spacing:-0.306px;"><span style="width:44.385px;transform:scaleX(0.9563)">PUNTO</span></div>
<div class="t " style="left:241.12px;top:577px;font-size:13.33px;word-spacing:-0.306px;"><span style="width:25.585px;transform:scaleX(0.9589)">-100</span></div>
<div class="t " style="left:337.71px;top:577px;font-size:13.33px;word-spacing:-0.306px;"><span style="width:6.994px;transform:scaleX(0.9434)">0</span></div>
<div class="t " style="left:415.71px;top:577px;font-size:13.33px;word-spacing:-0.306px;"><span style="width:6.994px;transform:scaleX(0.9434)">0</span></div>
<div class="t " style="left:486.71px;top:577px;font-size:13.33px;word-spacing:-0.306px;"><span style="width:13.989px;transform:scaleX(0.9434)">20</span></div>
<div class="t " style="left:571.71px;top:577px;font-size:13.33px;word-spacing:-0.306px;"><span style="width:6.994px;transform:scaleX(0.9434)">1</span></div>
<div class="t " style="left:727.71px;top:577px;font-size:13.33px;word-spacing:-0.306px;"><span style="width:6.994px;transform:scaleX(0.9434)">0</span></div>
<div class="t " style="left:805.71px;top:577px;font-size:13.33px;word-spacing:-0.306px;"><span style="width:6.994px;transform:scaleX(0.9434)">0</span></div>
<div class="t " style="left:883.71px;top:577px;font-size:13.33px;word-spacing:-0.306px;"><span style="width:6.994px;transform:scaleX(0.9434)">0</span></div>
<div class="t " style="left:947.72px;top:577px;font-size:13.33px;word-spacing:-0.306px;"><span style="width:20.983px;transform:scaleX(0.9434)">255</span></div>
<div class="t " style="left:1039.71px;top:577px;font-size:13.33px;word-spacing:-0.306px;"><span style="width:6.994px;transform:scaleX(0.9434)">0</span></div>
<div class="t " style="left:1108.71px;top:577px;font-size:13.33px;word-spacing:-0.306px;"><span style="width:6.994px;transform:scaleX(0.9434)">0</span></div>
<div class="t " style="left:1246.71px;top:577px;font-size:13.33px;word-spacing:-0.306px;"><span style="width:6.994px;transform:scaleX(0.9434)">0</span></div>
<div class="t " style="left:1315.71px;top:577px;font-size:13.33px;word-spacing:-0.306px;"><span style="width:6.994px;transform:scaleX(0.9434)">0</span></div>
<div class="t " style="left:1327.60px;top:577px;font-size:13.33px;word-spacing:-0.306px;"><span style="width:10.693px;transform:scaleX(0.8490)">SI</span></div>
<div class="t " style="left:103.71px;top:597px;font-size:13.33px;word-spacing:-0.306px;"><span style="width:6.994px;transform:scaleX(0.9434)">6</span></div>
<div class="t " style="left:115.60px;top:597px;font-size:13.33px;word-spacing:-0.306px;"><span style="width:44.385px;transform:scaleX(0.9563)">PUNTO</span></div>
<div class="t " style="left:241.12px;top:597px;font-size:13.33px;word-spacing:-0.306px;"><span style="width:25.585px;transform:scaleX(0.9589)">-100</span></div>
<div class="t " style="left:337.71px;top:597px;font-size:13.33px;word-spacing:-0.306px;"><span style="width:6.994px;transform:scaleX(0.9434)">0</span></div>
<div class="t " style="left:415.71px;top:597px;font-size:13.33px;word-spacing:-0.306px;"><span style="width:6.994px;transform:scaleX(0.9434)">0</span></div>
<div class="t " style="left:486.71px;top:597px;font-size:13.33px;word-spacing:-0.306px;"><span style="width:13.989px;transform:scaleX(0.9434)">20</span></div>
<div class="t " style="left:571.71px;top:597px;font-size:13.33px;word-spacing:-0.306px;"><span style="width:6.994px;transform:scaleX(0.9434)">1</span></div>
<div class="t " style="left:727.71px;top:597px;font-size:13.33px;word-spacing:-0.306px;"><span style="width:6.994px;transform:scaleX(0.9434)">0</span></div>
<div class="t " style="left:805.71px;top:597px;font-size:13.33px;word-spacing:-0.306px;"><span style="width:6.994px;transform:scaleX(0.9434)">0</span></div>
<div class="t " style="left:883.71px;top:597px;font-size:13.33px;word-spacing:-0.306px;"><span style="width:6.994px;transform:scaleX(0.9434)">0</span></div>
<div class="t " style="left:947.72px;top:597px;font-size:13.33px;word-spacing:-0.306px;"><span style="width:20.983px;transform:scaleX(0.9434)">255</span></div>
<div class="t " style="left:1039.71px;top:597px;font-size:13.33px;word-spacing:-0.306px;"><span style="width:6.994px;transform:scaleX(0.9434)">0</span></div>
<div class="t " style="left:1108.71px;top:597px;font-size:13.33px;word-spacing:-0.306px;"><span style="width:6.994px;transform:scaleX(0.9434)">0</span></div>
<div class="t " style="left:1246.71px;top:597px;font-size:13.33px;word-spacing:-0.306px;"><span style="width:6.994px;transform:scaleX(0.9434)">0</span></div>
<div class="t " style="left:1315.71px;top:597px;font-size:13.33px;word-spacing:-0.306px;"><span style="width:6.994px;transform:scaleX(0.9434)">0</span></div>
<div class="t " style="left:1327.60px;top:597px;font-size:13.33px;word-spacing:-0.306px;"><span style="width:10.693px;transform:scaleX(0.8490)">SI</span></div>
<div class="t " style="left:103.71px;top:617px;font-size:13.33px;word-spacing:-0.306px;"><span style="width:6.994px;transform:scaleX(0.9434)">7</span></div>
<div class="t " style="left:115.60px;top:617px;font-size:13.33px;word-spacing:-0.306px;"><span style="width:44.385px;transform:scaleX(0.9563)">PUNTO</span></div>
<div class="t " style="left:241.12px;top:617px;font-size:13.33px;word-spacing:-0.306px;"><span style="width:25.585px;transform:scaleX(0.9589)">-100</span></div>
<div class="t " style="left:337.71px;top:617px;font-size:13.33px;word-spacing:-0.306px;"><span style="width:6.994px;transform:scaleX(0.9434)">0</span></div>
<div class="t " style="left:415.71px;top:617px;font-size:13.33px;word-spacing:-0.306px;"><span style="width:6.994px;transform:scaleX(0.9434)">0</span></div>
<div class="t " style="left:486.71px;top:617px;font-size:13.33px;word-spacing:-0.306px;"><span style="width:13.989px;transform:scaleX(0.9434)">20</span></div>
<div class="t " style="left:571.71px;top:617px;font-size:13.33px;word-spacing:-0.306px;"><span style="width:6.994px;transform:scaleX(0.9434)">1</span></div>
<div class="t " style="left:727.71px;top:617px;font-size:13.33px;word-spacing:-0.306px;"><span style="width:6.994px;transform:scaleX(0.9434)">0</span></div>
<div class="t " style="left:805.71px;top:617px;font-size:13.33px;word-spacing:-0.306px;"><span style="width:6.994px;transform:scaleX(0.9434)">0</span></div>
<div class="t " style="left:883.71px;top:617px;font-size:13.33px;word-spacing:-0.306px;"><span style="width:6.994px;transform:scaleX(0.9434)">0</span></div>
<div class="t " style="left:947.72px;top:617px;font-size:13.33px;word-spacing:-0.306px;"><span style="width:20.983px;transform:scaleX(0.9434)">255</span></div>
<div class="t " style="left:1039.71px;top:617px;font-size:13.33px;word-spacing:-0.306px;"><span style="width:6.994px;transform:scaleX(0.9434)">0</span></div>
<div class="t " style="left:1108.71px;top:617px;font-size:13.33px;word-spacing:-0.306px;"><span style="width:6.994px;transform:scaleX(0.9434)">0</span></div>
<div class="t " style="left:1246.71px;top:617px;font-size:13.33px;word-spacing:-0.306px;"><span style="width:6.994px;transform:scaleX(0.9434)">0</span></div>
<div class="t " style="left:1315.71px;top:617px;font-size:13.33px;word-spacing:-0.306px;"><span style="width:6.994px;transform:scaleX(0.9434)">0</span></div>
<div class="t " style="left:1327.60px;top:617px;font-size:13.33px;word-spacing:-0.306px;"><span style="width:10.693px;transform:scaleX(0.8490)">SI</span></div>
<div class="t " style="left:103.71px;top:637px;font-size:13.33px;word-spacing:-0.306px;"><span style="width:6.994px;transform:scaleX(0.9434)">8</span></div>
<div class="t " style="left:115.60px;top:637px;font-size:13.33px;word-spacing:-0.306px;"><span style="width:44.385px;transform:scaleX(0.9563)">PUNTO</span></div>
<div class="t " style="left:241.12px;top:637px;font-size:13.33px;word-spacing:-0.306px;"><span style="width:25.585px;transform:scaleX(0.9589)">-100</span></div>
<div class="t " style="left:337.71px;top:637px;font-size:13.33px;word-spacing:-0.306px;"><span style="width:6.994px;transform:scaleX(0.9434)">0</span></div>
<div class="t " style="left:415.71px;top:637px;font-size:13.33px;word-spacing:-0.306px;"><span style="width:6.994px;transform:scaleX(0.9434)">0</span></div>
<div class="t " style="left:486.71px;top:637px;font-size:13.33px;word-spacing:-0.306px;"><span style="width:13.989px;transform:scaleX(0.9434)">20</span></div>
<div class="t " style="left:571.71px;top:637px;font-size:13.33px;word-spacing:-0.306px;"><span style="width:6.994px;transform:scaleX(0.9434)">1</span></div>
<div class="t " style="left:727.71px;top:637px;font-size:13.33px;word-spacing:-0.306px;"><span style="width:6.994px;transform:scaleX(0.9434)">0</span></div>
<div class="t " style="left:805.71px;top:637px;font-size:13.33px;word-spacing:-0.306px;"><span style="width:6.994px;transform:scaleX(0.9434)">0</span></div>
<div class="t " style="left:883.71px;top:637px;font-size:13.33px;word-spacing:-0.306px;"><span style="width:6.994px;transform:scaleX(0.9434)">0</span></div>
<div class="t " style="left:947.72px;top:637px;font-size:13.33px;word-spacing:-0.306px;"><span style="width:20.983px;transform:scaleX(0.9434)">255</span></div>
<div class="t " style="left:1039.71px;top:637px;font-size:13.33px;word-spacing:-0.306px;"><span style="width:6.994px;transform:scaleX(0.9434)">0</span></div>
<div class="t " style="left:1108.71px;top:637px;font-size:13.33px;word-spacing:-0.306px;"><span style="width:6.994px;transform:scaleX(0.9434)">0</span></div>
<div class="t " style="left:1246.71px;top:637px;font-size:13.33px;word-spacing:-0.306px;"><span style="width:6.994px;transform:scaleX(0.9434)">0</span></div>
<div class="t " style="left:1315.71px;top:637px;font-size:13.33px;word-spacing:-0.306px;"><span style="width:6.994px;transform:scaleX(0.9434)">0</span></div>
<div class="t " style="left:1327.60px;top:637px;font-size:13.33px;word-spacing:-0.306px;"><span style="width:10.693px;transform:scaleX(0.8490)">SI</span></div>
<div class="t " style="left:103.71px;top:657px;font-size:13.33px;word-spacing:-0.306px;"><span style="width:6.994px;transform:scaleX(0.9434)">9</span></div>
<div class="t " style="left:115.60px;top:657px;font-size:13.33px;word-spacing:-0.306px;"><span style="width:44.385px;transform:scaleX(0.9563)">PUNTO</span></div>
<div class="t " style="left:241.12px;top:657px;font-size:13.33px;word-spacing:-0.306px;"><span style="width:25.585px;transform:scaleX(0.9589)">-100</span></div>
<div class="t " style="left:337.71px;top:657px;font-size:13.33px;word-spacing:-0.306px;"><span style="width:6.994px;transform:scaleX(0.9434)">0</span></div>
<div class="t " style="left:415.71px;top:657px;font-size:13.33px;word-spacing:-0.306px;"><span style="width:6.994px;transform:scaleX(0.9434)">0</span></div>
<div class="t " style="left:486.71px;top:657px;font-size:13.33px;word-spacing:-0.306px;"><span style="width:13.989px;transform:scaleX(0.9434)">20</span></div>
<div class="t " style="left:571.71px;top:657px;font-size:13.33px;word-spacing:-0.306px;"><span style="width:6.994px;transform:scaleX(0.9434)">1</span></div>
<div class="t " style="left:727.71px;top:657px;font-size:13.33px;word-spacing:-0.306px;"><span style="width:6.994px;transform:scaleX(0.9434)">0</span></div>
<div class="t " style="left:805.71px;top:657px;font-size:13.33px;word-spacing:-0.306px;"><span style="width:6.994px;transform:scaleX(0.9434)">0</span></div>
<div class="t " style="left:883.71px;top:657px;font-size:13.33px;word-spacing:-0.306px;"><span style="width:6.994px;transform:scaleX(0.9434)">0</span></div>
<div class="t " style="left:947.72px;top:657px;font-size:13.33px;word-spacing:-0.306px;"><span style="width:20.983px;transform:scaleX(0.9434)">255</span></div>
<div class="t " style="left:1039.71px;top:657px;font-size:13.33px;word-spacing:-0.306px;"><span style="width:6.994px;transform:scaleX(0.9434)">0</span></div>
<div class="t " style="left:1108.71px;top:657px;font-size:13.33px;word-spacing:-0.306px;"><span style="width:6.994px;transform:scaleX(0.9434)">0</span></div>
<div class="t " style="left:1246.71px;top:657px;font-size:13.33px;word-spacing:-0.306px;"><span style="width:6.994px;transform:scaleX(0.9434)">0</span></div>
<div class="t " style="left:1315.71px;top:657px;font-size:13.33px;word-spacing:-0.306px;"><span style="width:6.994px;transform:scaleX(0.9434)">0</span></div>
<div class="t " style="left:1327.60px;top:657px;font-size:13.33px;word-spacing:-0.306px;"><span style="width:10.693px;transform:scaleX(0.8490)">SI</span></div>
<div class="t " style="left:96.71px;top:677px;font-size:13.33px;word-spacing:-0.306px;"><span style="width:13.989px;transform:scaleX(0.9434)">10</span></div>
<div class="t " style="left:115.60px;top:677px;font-size:13.33px;word-spacing:-0.306px;"><span style="width:44.385px;transform:scaleX(0.9563)">PUNTO</span></div>
<div class="t " style="left:241.12px;top:677px;font-size:13.33px;word-spacing:-0.306px;"><span style="width:25.585px;transform:scaleX(0.9589)">-100</span></div>
<div class="t " style="left:337.71px;top:677px;font-size:13.33px;word-spacing:-0.306px;"><span style="width:6.994px;transform:scaleX(0.9434)">0</span></div>
<div class="t " style="left:415.71px;top:677px;font-size:13.33px;word-spacing:-0.306px;"><span style="width:6.994px;transform:scaleX(0.9434)">0</span></div>
<div class="t " style="left:486.71px;top:677px;font-size:13.33px;word-spacing:-0.306px;"><span style="width:13.989px;transform:scaleX(0.9434)">20</span></div>
<div class="t " style="left:571.71px;top:677px;font-size:13.33px;word-spacing:-0.306px;"><span style="width:6.994px;transform:scaleX(0.9434)">1</span></div>
<div class="t " style="left:727.71px;top:677px;font-size:13.33px;word-spacing:-0.306px;"><span style="width:6.994px;transform:scaleX(0.9434)">0</span></div>
<div class="t " style="left:805.71px;top:677px;font-size:13.33px;word-spacing:-0.306px;"><span style="width:6.994px;transform:scaleX(0.9434)">0</span></div>
<div class="t " style="left:883.71px;top:677px;font-size:13.33px;word-spacing:-0.306px;"><span style="width:6.994px;transform:scaleX(0.9434)">0</span></div>
<div class="t " style="left:947.72px;top:677px;font-size:13.33px;word-spacing:-0.306px;"><span style="width:20.983px;transform:scaleX(0.9434)">255</span></div>
<div class="t " style="left:1039.71px;top:677px;font-size:13.33px;word-spacing:-0.306px;"><span style="width:6.994px;transform:scaleX(0.9434)">0</span></div>
<div class="t " style="left:1108.71px;top:677px;font-size:13.33px;word-spacing:-0.306px;"><span style="width:6.994px;transform:scaleX(0.9434)">0</span></div>
<div class="t " style="left:1246.71px;top:677px;font-size:13.33px;word-spacing:-0.306px;"><span style="width:6.994px;transform:scaleX(0.9434)">0</span></div>
<div class="t " style="left:1315.71px;top:677px;font-size:13.33px;word-spacing:-0.306px;"><span style="width:6.994px;transform:scaleX(0.9434)">0</span></div>
<div class="t " style="left:1327.60px;top:677px;font-size:13.33px;word-spacing:-0.306px;"><span style="width:10.693px;transform:scaleX(0.8490)">SI</span></div>
<div class="t " style="left:96.71px;top:697px;font-size:13.33px;word-spacing:-0.306px;"><span style="width:13.989px;transform:scaleX(1.0109)">11</span></div>
<div class="t " style="left:115.60px;top:697px;font-size:13.33px;word-spacing:-0.306px;"><span style="width:44.385px;transform:scaleX(0.9563)">PUNTO</span></div>
<div class="t " style="left:241.12px;top:697px;font-size:13.33px;word-spacing:-0.306px;"><span style="width:25.585px;transform:scaleX(0.9589)">-100</span></div>
<div class="t " style="left:337.71px;top:697px;font-size:13.33px;word-spacing:-0.306px;"><span style="width:6.994px;transform:scaleX(0.9434)">0</span></div>
<div class="t " style="left:415.71px;top:697px;font-size:13.33px;word-spacing:-0.306px;"><span style="width:6.994px;transform:scaleX(0.9434)">0</span></div>
<div class="t " style="left:486.71px;top:697px;font-size:13.33px;word-spacing:-0.306px;"><span style="width:13.989px;transform:scaleX(0.9434)">20</span></div>
<div class="t " style="left:571.71px;top:697px;font-size:13.33px;word-spacing:-0.306px;"><span style="width:6.994px;transform:scaleX(0.9434)">1</span></div>
<div class="t " style="left:727.71px;top:697px;font-size:13.33px;word-spacing:-0.306px;"><span style="width:6.994px;transform:scaleX(0.9434)">0</span></div>
<div class="t " style="left:805.71px;top:697px;font-size:13.33px;word-spacing:-0.306px;"><span style="width:6.994px;transform:scaleX(0.9434)">0</span></div>
<div class="t " style="left:883.71px;top:697px;font-size:13.33px;word-spacing:-0.306px;"><span style="width:6.994px;transform:scaleX(0.9434)">0</span></div>
<div class="t " style="left:947.72px;top:697px;font-size:13.33px;word-spacing:-0.306px;"><span style="width:20.983px;transform:scaleX(0.9434)">255</span></div>
<div class="t " style="left:1039.71px;top:697px;font-size:13.33px;word-spacing:-0.306px;"><span style="width:6.994px;transform:scaleX(0.9434)">0</span></div>
<div class="t " style="left:1108.71px;top:697px;font-size:13.33px;word-spacing:-0.306px;"><span style="width:6.994px;transform:scaleX(0.9434)">0</span></div>
<div class="t " style="left:1246.71px;top:697px;font-size:13.33px;word-spacing:-0.306px;"><span style="width:6.994px;transform:scaleX(0.9434)">0</span></div>
<div class="t " style="left:1315.71px;top:697px;font-size:13.33px;word-spacing:-0.306px;"><span style="width:6.994px;transform:scaleX(0.9434)">0</span></div>
<div class="t " style="left:1327.60px;top:697px;font-size:13.33px;word-spacing:-0.306px;"><span style="width:10.693px;transform:scaleX(0.8490)">SI</span></div>
<div class="t " style="left:96.71px;top:717px;font-size:13.33px;word-spacing:-0.306px;"><span style="width:13.989px;transform:scaleX(0.9434)">12</span></div>
<div class="t " style="left:115.60px;top:717px;font-size:13.33px;word-spacing:-0.306px;"><span style="width:44.385px;transform:scaleX(0.9563)">PUNTO</span></div>
<div class="t " style="left:241.12px;top:717px;font-size:13.33px;word-spacing:-0.306px;"><span style="width:25.585px;transform:scaleX(0.9589)">-100</span></div>
<div class="t " style="left:337.71px;top:717px;font-size:13.33px;word-spacing:-0.306px;"><span style="width:6.994px;transform:scaleX(0.9434)">0</span></div>
<div class="t " style="left:415.71px;top:717px;font-size:13.33px;word-spacing:-0.306px;"><span style="width:6.994px;transform:scaleX(0.9434)">0</span></div>
<div class="t " style="left:486.71px;top:717px;font-size:13.33px;word-spacing:-0.306px;"><span style="width:13.989px;transform:scaleX(0.9434)">20</span></div>
<div class="t " style="left:571.71px;top:717px;font-size:13.33px;word-spacing:-0.306px;"><span style="width:6.994px;transform:scaleX(0.9434)">1</span></div>
<div class="t " style="left:727.71px;top:717px;font-size:13.33px;word-spacing:-0.306px;"><span style="width:6.994px;transform:scaleX(0.9434)">0</span></div>
<div class="t " style="left:805.71px;top:717px;font-size:13.33px;word-spacing:-0.306px;"><span style="width:6.994px;transform:scaleX(0.9434)">0</span></div>
<div class="t " style="left:883.71px;top:717px;font-size:13.33px;word-spacing:-0.306px;"><span style="width:6.994px;transform:scaleX(0.9434)">0</span></div>
<div class="t " style="left:947.72px;top:717px;font-size:13.33px;word-spacing:-0.306px;"><span style="width:20.983px;transform:scaleX(0.9434)">255</span></div>
<div class="t " style="left:1039.71px;top:717px;font-size:13.33px;word-spacing:-0.306px;"><span style="width:6.994px;transform:scaleX(0.9434)">0</span></div>
<div class="t " style="left:1108.71px;top:717px;font-size:13.33px;word-spacing:-0.306px;"><span style="width:6.994px;transform:scaleX(0.9434)">0</span></div>
<div class="t " style="left:1246.71px;top:717px;font-size:13.33px;word-spacing:-0.306px;"><span style="width:6.994px;transform:scaleX(0.9434)">0</span></div>
<div class="t " style="left:1315.71px;top:717px;font-size:13.33px;word-spacing:-0.306px;"><span style="width:6.994px;transform:scaleX(0.9434)">0</span></div>
<div class="t " style="left:1327.60px;top:717px;font-size:13.33px;word-spacing:-0.306px;"><span style="width:10.693px;transform:scaleX(0.8490)">SI</span></div>
<div class="t " style="left:96.71px;top:737px;font-size:13.33px;word-spacing:-0.306px;"><span style="width:13.989px;transform:scaleX(0.9434)">13</span></div>
<div class="t " style="left:115.60px;top:737px;font-size:13.33px;word-spacing:-0.306px;"><span style="width:44.385px;transform:scaleX(0.9563)">PUNTO</span></div>
<div class="t " style="left:241.12px;top:737px;font-size:13.33px;word-spacing:-0.306px;"><span style="width:25.585px;transform:scaleX(0.9589)">-100</span></div>
<div class="t " style="left:337.71px;top:737px;font-size:13.33px;word-spacing:-0.306px;"><span style="width:6.994px;transform:scaleX(0.9434)">0</span></div>
<div class="t " style="left:415.71px;top:737px;font-size:13.33px;word-spacing:-0.306px;"><span style="width:6.994px;transform:scaleX(0.9434)">0</span></div>
<div class="t " style="left:486.71px;top:737px;font-size:13.33px;word-spacing:-0.306px;"><span style="width:13.989px;transform:scaleX(0.9434)">20</span></div>
<div class="t " style="left:571.71px;top:737px;font-size:13.33px;word-spacing:-0.306px;"><span style="width:6.994px;transform:scaleX(0.9434)">1</span></div>
<div class="t " style="left:727.71px;top:737px;font-size:13.33px;word-spacing:-0.306px;"><span style="width:6.994px;transform:scaleX(0.9434)">0</span></div>
<div class="t " style="left:805.71px;top:737px;font-size:13.33px;word-spacing:-0.306px;"><span style="width:6.994px;transform:scaleX(0.9434)">0</span></div>
<div class="t " style="left:883.71px;top:737px;font-size:13.33px;word-spacing:-0.306px;"><span style="width:6.994px;transform:scaleX(0.9434)">0</span></div>
<div class="t " style="left:947.72px;top:737px;font-size:13.33px;word-spacing:-0.306px;"><span style="width:20.983px;transform:scaleX(0.9434)">255</span></div>
<div class="t " style="left:1039.71px;top:737px;font-size:13.33px;word-spacing:-0.306px;"><span style="width:6.994px;transform:scaleX(0.9434)">0</span></div>
<div class="t " style="left:1108.71px;top:737px;font-size:13.33px;word-spacing:-0.306px;"><span style="width:6.994px;transform:scaleX(0.9434)">0</span></div>
<div class="t " style="left:1246.71px;top:737px;font-size:13.33px;word-spacing:-0.306px;"><span style="width:6.994px;transform:scaleX(0.9434)">0</span></div>
<div class="t " style="left:1315.71px;top:737px;font-size:13.33px;word-spacing:-0.306px;"><span style="width:6.994px;transform:scaleX(0.9434)">0</span></div>
<div class="t " style="left:1327.60px;top:737px;font-size:13.33px;word-spacing:-0.306px;"><span style="width:10.693px;transform:scaleX(0.8490)">SI</span></div>
<div class="t " style="left:96.71px;top:757px;font-size:13.33px;word-spacing:-0.306px;"><span style="width:13.989px;transform:scaleX(0.9434)">14</span></div>
<div class="t " style="left:115.60px;top:757px;font-size:13.33px;word-spacing:-0.306px;"><span style="width:44.385px;transform:scaleX(0.9563)">PUNTO</span></div>
<div class="t " style="left:241.12px;top:757px;font-size:13.33px;word-spacing:-0.306px;"><span style="width:25.585px;transform:scaleX(0.9589)">-100</span></div>
<div class="t " style="left:337.71px;top:757px;font-size:13.33px;word-spacing:-0.306px;"><span style="width:6.994px;transform:scaleX(0.9434)">0</span></div>
<div class="t " style="left:415.71px;top:757px;font-size:13.33px;word-spacing:-0.306px;"><span style="width:6.994px;transform:scaleX(0.9434)">0</span></div>
<div class="t " style="left:486.71px;top:757px;font-size:13.33px;word-spacing:-0.306px;"><span style="width:13.989px;transform:scaleX(0.9434)">20</span></div>
<div class="t " style="left:571.71px;top:757px;font-size:13.33px;word-spacing:-0.306px;"><span style="width:6.994px;transform:scaleX(0.9434)">1</span></div>
<div class="t " style="left:727.71px;top:757px;font-size:13.33px;word-spacing:-0.306px;"><span style="width:6.994px;transform:scaleX(0.9434)">0</span></div>
<div class="t " style="left:805.71px;top:757px;font-size:13.33px;word-spacing:-0.306px;"><span style="width:6.994px;transform:scaleX(0.9434)">0</span></div>
<div class="t " style="left:883.71px;top:757px;font-size:13.33px;word-spacing:-0.306px;"><span style="width:6.994px;transform:scaleX(0.9434)">0</span></div>
<div class="t " style="left:947.72px;top:757px;font-size:13.33px;word-spacing:-0.306px;"><span style="width:20.983px;transform:scaleX(0.9434)">255</span></div>
<div class="t " style="left:1039.71px;top:757px;font-size:13.33px;word-spacing:-0.306px;"><span style="width:6.994px;transform:scaleX(0.9434)">0</span></div>
<div class="t " style="left:1108.71px;top:757px;font-size:13.33px;word-spacing:-0.306px;"><span style="width:6.994px;transform:scaleX(0.9434)">0</span></div>
<div class="t " style="left:1246.71px;top:757px;font-size:13.33px;word-spacing:-0.306px;"><span style="width:6.994px;transform:scaleX(0.9434)">0</span></div>
<div class="t " style="left:1315.71px;top:757px;font-size:13.33px;word-spacing:-0.306px;"><span style="width:6.994px;transform:scaleX(0.9434)">0</span></div>
<div class="t " style="left:1327.60px;top:757px;font-size:13.33px;word-spacing:-0.306px;"><span style="width:10.693px;transform:scaleX(0.8490)">SI</span></div>
<div class="t " style="left:96.71px;top:777px;font-size:13.33px;word-spacing:-0.306px;"><span style="width:13.989px;transform:scaleX(0.9434)">15</span></div>
<div class="t " style="left:115.60px;top:777px;font-size:13.33px;word-spacing:-0.306px;"><span style="width:44.385px;transform:scaleX(0.9563)">PUNTO</span></div>
<div class="t " style="left:241.12px;top:777px;font-size:13.33px;word-spacing:-0.306px;"><span style="width:25.585px;transform:scaleX(0.9589)">-100</span></div>
<div class="t " style="left:337.71px;top:777px;font-size:13.33px;word-spacing:-0.306px;"><span style="width:6.994px;transform:scaleX(0.9434)">0</span></div>
<div class="t " style="left:415.71px;top:777px;font-size:13.33px;word-spacing:-0.306px;"><span style="width:6.994px;transform:scaleX(0.9434)">0</span></div>
<div class="t " style="left:486.71px;top:777px;font-size:13.33px;word-spacing:-0.306px;"><span style="width:13.989px;transform:scaleX(0.9434)">20</span></div>
<div class="t " style="left:571.71px;top:777px;font-size:13.33px;word-spacing:-0.306px;"><span style="width:6.994px;transform:scaleX(0.9434)">1</span></div>
<div class="t " style="left:727.71px;top:777px;font-size:13.33px;word-spacing:-0.306px;"><span style="width:6.994px;transform:scaleX(0.9434)">0</span></div>
<div class="t " style="left:805.71px;top:777px;font-size:13.33px;word-spacing:-0.306px;"><span style="width:6.994px;transform:scaleX(0.9434)">0</span></div>
<div class="t " style="left:883.71px;top:777px;font-size:13.33px;word-spacing:-0.306px;"><span style="width:6.994px;transform:scaleX(0.9434)">0</span></div>
<div class="t " style="left:947.72px;top:777px;font-size:13.33px;word-spacing:-0.306px;"><span style="width:20.983px;transform:scaleX(0.9434)">255</span></div>
<div class="t " style="left:1039.71px;top:777px;font-size:13.33px;word-spacing:-0.306px;"><span style="width:6.994px;transform:scaleX(0.9434)">0</span></div>
<div class="t " style="left:1108.71px;top:777px;font-size:13.33px;word-spacing:-0.306px;"><span style="width:6.994px;transform:scaleX(0.9434)">0</span></div>
<div class="t " style="left:1246.71px;top:777px;font-size:13.33px;word-spacing:-0.306px;"><span style="width:6.994px;transform:scaleX(0.9434)">0</span></div>
<div class="t " style="left:1315.71px;top:777px;font-size:13.33px;word-spacing:-0.306px;"><span style="width:6.994px;transform:scaleX(0.9434)">0</span></div>
<div class="t " style="left:1327.60px;top:777px;font-size:13.33px;word-spacing:-0.306px;"><span style="width:10.693px;transform:scaleX(0.8490)">SI</span></div>
<div class="btn" style="left:676px;top:48px;width:177px;height:35px"></div>
<div class="t " style="left:720.10px;top:55px;font-size:14px;word-spacing:-0.567px;"><span style="width:48.911px;transform:scaleX(0.9523)">Generar</span> <span style="width:35.066px;transform:scaleX(0.9201)">HTML</span></div>
<div class="btn" style="left:678px;top:98px;width:176px;height:46px"></div>
<div class="t " style="left:697.50px;top:111px;font-size:14px;word-spacing:-0.434px;"><span style="width:70.925px;transform:scaleX(0.9695)">Seleccionar</span> <span style="width:61.019px;transform:scaleX(1.0597)">directorio</span></div>
<div class="btn" style="left:877px;top:48px;width:135px;height:27px"></div>
<div class="t " style="left:895.00px;top:53px;font-size:14px;word-spacing:-0.413px;"><span style="width:31.234px;transform:scaleX(1.0567)">Abrir</span> <span style="width:15.733px;transform:scaleX(1.0103)">en</span> <span style="width:43.078px;transform:scaleX(1.0068)">Firefox</span></div>
<div class="btn" style="left:877px;top:84px;width:134px;height:26px"></div>
<div class="t " style="left:892.00px;top:88px;font-size:14px;word-spacing:-0.480px;"><span style="width:30.626px;transform:scaleX(1.0361)">Abrir</span> <span style="width:15.427px;transform:scaleX(0.9907)">en</span> <span style="width:48.727px;transform:scaleX(0.9786)">Chrome</span></div>
<div class="btn" style="left:879px;top:117px;width:134px;height:28px"></div>
<div class="t " style="left:897.90px;top:121px;font-size:14px;word-spacing:-0.459px;"><span style="width:40.355px;transform:scaleX(0.9430)">Cargar</span> <span style="width:50.314px;transform:scaleX(1.0262)">ejemplo</span></div>
<div style="left:1186px;top:210px;width:72px;height:2px;background:#217346;"></div>
<div style="left:1186px;top:231px;width:68px;height:2px;background:#217346;"></div>
<div style="left:1186px;top:210px;width:2px;height:23px;background:#217346;"></div>
<div style="left:1256px;top:210px;width:2px;height:19px;background:#217346;"></div>
<div style="left:1253px;top:228px;width:7px;height:7px;background:#fff;"></div>
<div style="left:1254px;top:229px;width:5px;height:5px;background:#217346;"></div>
<div style="left:0px;top:0px;width:1401px;height:28px;background:#e6e6e6;"></div>
<div style="left:0px;top:28px;width:1401px;height:1px;background:#9e9e9e;"></div>
<div style="left:18px;top:8px;width:1px;height:20px;background:#bcbcbc;"></div>
<div style="left:113px;top:8px;width:1px;height:20px;background:#bcbcbc;"></div>
<div style="left:191px;top:8px;width:1px;height:20px;background:#bcbcbc;"></div>
<div style="left:269px;top:8px;width:1px;height:20px;background:#bcbcbc;"></div>
<div style="left:347px;top:8px;width:1px;height:20px;background:#bcbcbc;"></div>
<div style="left:425px;top:8px;width:1px;height:20px;background:#bcbcbc;"></div>
<div style="left:503px;top:8px;width:1px;height:20px;background:#bcbcbc;"></div>
<div style="left:581px;top:8px;width:1px;height:20px;background:#bcbcbc;"></div>
<div style="left:659px;top:8px;width:1px;height:20px;background:#bcbcbc;"></div>
<div style="left:737px;top:8px;width:1px;height:20px;background:#bcbcbc;"></div>
<div style="left:815px;top:8px;width:1px;height:20px;background:#bcbcbc;"></div>
<div style="left:893px;top:8px;width:1px;height:20px;background:#bcbcbc;"></div>
<div style="left:971px;top:8px;width:1px;height:20px;background:#bcbcbc;"></div>
<div style="left:1049px;top:8px;width:1px;height:20px;background:#bcbcbc;"></div>
<div style="left:1118px;top:8px;width:1px;height:20px;background:#bcbcbc;"></div>
<div style="left:1187px;top:8px;width:1px;height:20px;background:#bcbcbc;"></div>
<div style="left:1256px;top:8px;width:1px;height:20px;background:#bcbcbc;"></div>
<div style="left:1325px;top:8px;width:1px;height:20px;background:#bcbcbc;"></div>
<div style="left:1394px;top:8px;width:1px;height:20px;background:#bcbcbc;"></div>
<div style="left:1188px;top:9px;width:68px;height:18px;background:#d2d2d2;"></div>
<div style="left:1187px;top:27px;width:70px;height:2px;background:#217346;"></div>
<div class="t " style="left:61.65px;top:10px;font-size:13.33px;color:#262626;word-spacing:-0.306px;"><span style="width:8.697px;transform:scaleX(0.9782)">A</span></div>
<div class="t " style="left:148.41px;top:10px;font-size:13.33px;color:#262626;word-spacing:-0.306px;"><span style="width:8.175px;transform:scaleX(0.9195)">B</span></div>
<div class="t " style="left:226.49px;top:10px;font-size:13.33px;color:#262626;word-spacing:-0.306px;"><span style="width:8.014px;transform:scaleX(0.8325)">C</span></div>
<div class="t " style="left:303.88px;top:10px;font-size:13.33px;color:#262626;word-spacing:-0.306px;"><span style="width:9.247px;transform:scaleX(0.9605)">D</span></div>
<div class="t " style="left:382.83px;top:10px;font-size:13.33px;color:#262626;word-spacing:-0.306px;"><span style="width:7.339px;transform:scaleX(0.8254)">E</span></div>
<div class="t " style="left:461.05px;top:10px;font-size:13.33px;color:#262626;word-spacing:-0.306px;"><span style="width:6.906px;transform:scaleX(0.8481)">F</span></div>
<div class="t " style="left:537.76px;top:10px;font-size:13.33px;color:#262626;word-spacing:-0.306px;"><span style="width:9.482px;transform:scaleX(0.9145)">G</span></div>
<div class="t " style="left:615.82px;top:10px;font-size:13.33px;color:#262626;word-spacing:-0.306px;"><span style="width:9.364px;transform:scaleX(0.9727)">H</span></div>
<div class="t " style="left:696.61px;top:10px;font-size:13.33px;color:#262626;word-spacing:-0.306px;"><span style="width:3.787px;transform:scaleX(1.0224)">I</span></div>
<div class="t " style="left:774.10px;top:10px;font-size:13.33px;color:#262626;word-spacing:-0.306px;"><span style="width:4.793px;transform:scaleX(0.7191)">J</span></div>
<div class="t " style="left:850.60px;top:10px;font-size:13.33px;color:#262626;word-spacing:-0.306px;"><span style="width:7.809px;transform:scaleX(0.8783)">K</span></div>
<div class="t " style="left:929.34px;top:10px;font-size:13.33px;color:#262626;word-spacing:-0.306px;"><span style="width:6.319px;transform:scaleX(0.8523)">L</span></div>
<div class="t " style="left:1004.07px;top:10px;font-size:13.33px;color:#262626;word-spacing:-0.306px;"><span style="width:12.851px;transform:scaleX(1.1573)">M</span></div>
<div class="t " style="left:1079.15px;top:10px;font-size:13.33px;color:#262626;word-spacing:-0.306px;"><span style="width:9.702px;transform:scaleX(1.0078)">N</span></div>
<div class="t " style="left:1148.02px;top:10px;font-size:13.33px;color:#262626;word-spacing:-0.306px;"><span style="width:9.952px;transform:scaleX(0.9598)">O</span></div>
<div class="t " style="left:1218.12px;top:10px;font-size:13.33px;color:#217346;word-spacing:-0.306px;"><span style="width:7.765px;transform:scaleX(0.8733)">P</span></div>
<div class="t " style="left:1285.94px;top:10px;font-size:13.33px;color:#262626;word-spacing:-0.306px;"><span style="width:10.113px;transform:scaleX(0.9753)">Q</span></div>
<div class="t " style="left:1355.92px;top:10px;font-size:13.33px;color:#262626;word-spacing:-0.306px;"><span style="width:8.161px;transform:scaleX(0.8477)">R</span></div>
<div class="t " style="left:1425.55px;top:10px;font-size:13.33px;color:#262626;word-spacing:-0.306px;"><span style="width:6.906px;transform:scaleX(0.7768)">S</span></div>
<div style="left:0px;top:29px;width:18px;height:761px;background:#e6e6e6;"></div>
<div style="left:18px;top:29px;width:1px;height:761px;background:#959595;"></div>
<div style="left:18px;top:8px;width:1px;height:21px;background:#a6a6a6;"></div>
<div style="left:0px;top:48px;width:18px;height:1px;background:#b2b2b2;"></div>
<div class="t " style="left:2.10px;top:30px;font-size:13.33px;color:#262626;word-spacing:-0.306px;"><span style="width:6.994px;transform:scaleX(0.9434)">1</span></div>
<div style="left:0px;top:68px;width:18px;height:1px;background:#b2b2b2;"></div>
<div class="t " style="left:2.10px;top:50px;font-size:13.33px;color:#262626;word-spacing:-0.306px;"><span style="width:6.994px;transform:scaleX(0.9434)">2</span></div>
<div style="left:0px;top:89px;width:18px;height:1px;background:#b2b2b2;"></div>
<div class="t " style="left:2.10px;top:70px;font-size:13.33px;color:#262626;word-spacing:-0.306px;"><span style="width:6.994px;transform:scaleX(0.9434)">3</span></div>
<div style="left:0px;top:109px;width:18px;height:1px;background:#b2b2b2;"></div>
<div class="t " style="left:2.10px;top:91px;font-size:13.33px;color:#262626;word-spacing:-0.306px;"><span style="width:6.994px;transform:scaleX(0.9434)">4</span></div>
<div style="left:0px;top:129px;width:18px;height:1px;background:#b2b2b2;"></div>
<div class="t " style="left:2.10px;top:111px;font-size:13.33px;color:#262626;word-spacing:-0.306px;"><span style="width:6.994px;transform:scaleX(0.9434)">5</span></div>
<div style="left:0px;top:149px;width:18px;height:1px;background:#b2b2b2;"></div>
<div class="t " style="left:2.10px;top:131px;font-size:13.33px;color:#262626;word-spacing:-0.306px;"><span style="width:6.994px;transform:scaleX(0.9434)">6</span></div>
<div style="left:0px;top:169px;width:18px;height:1px;background:#b2b2b2;"></div>
<div class="t " style="left:2.10px;top:151px;font-size:13.33px;color:#262626;word-spacing:-0.306px;"><span style="width:6.994px;transform:scaleX(0.9434)">7</span></div>
<div style="left:0px;top:190px;width:18px;height:1px;background:#b2b2b2;"></div>
<div class="t " style="left:2.10px;top:171px;font-size:13.33px;color:#262626;word-spacing:-0.306px;"><span style="width:6.994px;transform:scaleX(0.9434)">8</span></div>
<div style="left:0px;top:211px;width:17px;height:1px;background:#b2b2b2;"></div>
<div class="t " style="left:2.10px;top:192px;font-size:13.33px;color:#262626;word-spacing:-0.306px;"><span style="width:6.994px;transform:scaleX(0.9434)">9</span></div>
<div style="left:0px;top:212px;width:17px;height:19px;background:#d2d2d2;"></div>
<div style="left:17px;top:211px;width:2px;height:21px;background:#217346;"></div>
<div style="left:0px;top:231px;width:17px;height:1px;background:#b2b2b2;"></div>
<div class="t " style="left:-1.39px;top:213px;font-size:13.33px;color:#217346;word-spacing:-0.306px;"><span style="width:13.989px;transform:scaleX(0.9434)">10</span></div>
<div style="left:0px;top:251px;width:18px;height:1px;background:#b2b2b2;"></div>
<div class="t " style="left:-1.39px;top:233px;font-size:13.33px;color:#262626;word-spacing:-0.306px;"><span style="width:13.989px;transform:scaleX(1.0109)">11</span></div>
<div style="left:0px;top:271px;width:18px;height:1px;background:#b2b2b2;"></div>
<div class="t " style="left:-1.39px;top:253px;font-size:13.33px;color:#262626;word-spacing:-0.306px;"><span style="width:13.989px;transform:scaleX(0.9434)">12</span></div>
<div style="left:0px;top:292px;width:18px;height:1px;background:#b2b2b2;"></div>
<div class="t " style="left:-1.39px;top:273px;font-size:13.33px;color:#262626;word-spacing:-0.306px;"><span style="width:13.989px;transform:scaleX(0.9434)">13</span></div>
<div style="left:0px;top:313px;width:18px;height:1px;background:#b2b2b2;"></div>
<div class="t " style="left:-1.39px;top:294px;font-size:13.33px;color:#262626;word-spacing:-0.306px;"><span style="width:13.989px;transform:scaleX(0.9434)">14</span></div>
<div style="left:0px;top:333px;width:18px;height:1px;background:#b2b2b2;"></div>
<div class="t " style="left:-1.39px;top:315px;font-size:13.33px;color:#262626;word-spacing:-0.306px;"><span style="width:13.989px;transform:scaleX(0.9434)">15</span></div>
<div style="left:0px;top:354px;width:18px;height:1px;background:#b2b2b2;"></div>
<div class="t " style="left:-1.39px;top:335px;font-size:13.33px;color:#262626;word-spacing:-0.306px;"><span style="width:13.989px;transform:scaleX(0.9434)">16</span></div>
<div style="left:0px;top:374px;width:18px;height:1px;background:#b2b2b2;"></div>
<div class="t " style="left:-1.39px;top:356px;font-size:13.33px;color:#262626;word-spacing:-0.306px;"><span style="width:13.989px;transform:scaleX(0.9434)">17</span></div>
<div style="left:0px;top:394px;width:18px;height:1px;background:#b2b2b2;"></div>
<div class="t " style="left:-1.39px;top:376px;font-size:13.33px;color:#262626;word-spacing:-0.306px;"><span style="width:13.989px;transform:scaleX(0.9434)">18</span></div>
<div style="left:0px;top:414px;width:18px;height:1px;background:#b2b2b2;"></div>
<div class="t " style="left:-1.39px;top:396px;font-size:13.33px;color:#262626;word-spacing:-0.306px;"><span style="width:13.989px;transform:scaleX(0.9434)">19</span></div>
<div style="left:0px;top:435px;width:18px;height:1px;background:#b2b2b2;"></div>
<div class="t " style="left:-1.39px;top:416px;font-size:13.33px;color:#262626;word-spacing:-0.306px;"><span style="width:13.989px;transform:scaleX(0.9434)">20</span></div>
<div style="left:0px;top:455px;width:18px;height:1px;background:#b2b2b2;"></div>
<div class="t " style="left:-1.39px;top:437px;font-size:13.33px;color:#262626;word-spacing:-0.306px;"><span style="width:13.989px;transform:scaleX(0.9434)">21</span></div>
<div style="left:0px;top:475px;width:18px;height:1px;background:#b2b2b2;"></div>
<div class="t " style="left:-1.39px;top:457px;font-size:13.33px;color:#262626;word-spacing:-0.306px;"><span style="width:13.989px;transform:scaleX(0.9434)">22</span></div>
<div style="left:0px;top:495px;width:18px;height:1px;background:#b2b2b2;"></div>
<div class="t " style="left:-1.39px;top:477px;font-size:13.33px;color:#262626;word-spacing:-0.306px;"><span style="width:13.989px;transform:scaleX(0.9434)">23</span></div>
<div style="left:0px;top:515px;width:18px;height:1px;background:#b2b2b2;"></div>
<div class="t " style="left:-1.39px;top:497px;font-size:13.33px;color:#262626;word-spacing:-0.306px;"><span style="width:13.989px;transform:scaleX(0.9434)">24</span></div>
<div style="left:0px;top:535px;width:18px;height:1px;background:#b2b2b2;"></div>
<div class="t " style="left:-1.39px;top:517px;font-size:13.33px;color:#262626;word-spacing:-0.306px;"><span style="width:13.989px;transform:scaleX(0.9434)">25</span></div>
<div style="left:0px;top:555px;width:18px;height:1px;background:#b2b2b2;"></div>
<div class="t " style="left:-1.39px;top:537px;font-size:13.33px;color:#262626;word-spacing:-0.306px;"><span style="width:13.989px;transform:scaleX(0.9434)">26</span></div>
<div style="left:0px;top:575px;width:18px;height:1px;background:#b2b2b2;"></div>
<div class="t " style="left:-1.39px;top:557px;font-size:13.33px;color:#262626;word-spacing:-0.306px;"><span style="width:13.989px;transform:scaleX(0.9434)">27</span></div>
<div style="left:0px;top:595px;width:18px;height:1px;background:#b2b2b2;"></div>
<div class="t " style="left:-1.39px;top:577px;font-size:13.33px;color:#262626;word-spacing:-0.306px;"><span style="width:13.989px;transform:scaleX(0.9434)">28</span></div>
<div style="left:0px;top:615px;width:18px;height:1px;background:#b2b2b2;"></div>
<div class="t " style="left:-1.39px;top:597px;font-size:13.33px;color:#262626;word-spacing:-0.306px;"><span style="width:13.989px;transform:scaleX(0.9434)">29</span></div>
<div style="left:0px;top:635px;width:18px;height:1px;background:#b2b2b2;"></div>
<div class="t " style="left:-1.39px;top:617px;font-size:13.33px;color:#262626;word-spacing:-0.306px;"><span style="width:13.989px;transform:scaleX(0.9434)">30</span></div>
<div style="left:0px;top:655px;width:18px;height:1px;background:#b2b2b2;"></div>
<div class="t " style="left:-1.39px;top:637px;font-size:13.33px;color:#262626;word-spacing:-0.306px;"><span style="width:13.989px;transform:scaleX(0.9434)">31</span></div>
<div style="left:0px;top:675px;width:18px;height:1px;background:#b2b2b2;"></div>
<div class="t " style="left:-1.39px;top:657px;font-size:13.33px;color:#262626;word-spacing:-0.306px;"><span style="width:13.989px;transform:scaleX(0.9434)">32</span></div>
<div style="left:0px;top:695px;width:18px;height:1px;background:#b2b2b2;"></div>
<div class="t " style="left:-1.39px;top:677px;font-size:13.33px;color:#262626;word-spacing:-0.306px;"><span style="width:13.989px;transform:scaleX(0.9434)">33</span></div>
<div style="left:0px;top:715px;width:18px;height:1px;background:#b2b2b2;"></div>
<div class="t " style="left:-1.39px;top:697px;font-size:13.33px;color:#262626;word-spacing:-0.306px;"><span style="width:13.989px;transform:scaleX(0.9434)">34</span></div>
<div style="left:0px;top:735px;width:18px;height:1px;background:#b2b2b2;"></div>
<div class="t " style="left:-1.39px;top:717px;font-size:13.33px;color:#262626;word-spacing:-0.306px;"><span style="width:13.989px;transform:scaleX(0.9434)">35</span></div>
<div style="left:0px;top:755px;width:18px;height:1px;background:#b2b2b2;"></div>
<div class="t " style="left:-1.39px;top:737px;font-size:13.33px;color:#262626;word-spacing:-0.306px;"><span style="width:13.989px;transform:scaleX(0.9434)">36</span></div>
<div style="left:0px;top:775px;width:18px;height:1px;background:#b2b2b2;"></div>
<div class="t " style="left:-1.39px;top:757px;font-size:13.33px;color:#262626;word-spacing:-0.306px;"><span style="width:13.989px;transform:scaleX(0.9434)">37</span></div>
<div style="left:0px;top:795px;width:18px;height:1px;background:#b2b2b2;"></div>
<div class="t " style="left:-1.39px;top:777px;font-size:13.33px;color:#262626;word-spacing:-0.306px;"><span style="width:13.989px;transform:scaleX(0.9434)">38</span></div>
<svg style="position:absolute;left:3px;top:12px" width="13" height="13" viewBox="0 0 13 13"><polygon points="12,1 12,12.5 0.5,12.5" fill="#b5b5b5"/></svg>
</div></body></html>
